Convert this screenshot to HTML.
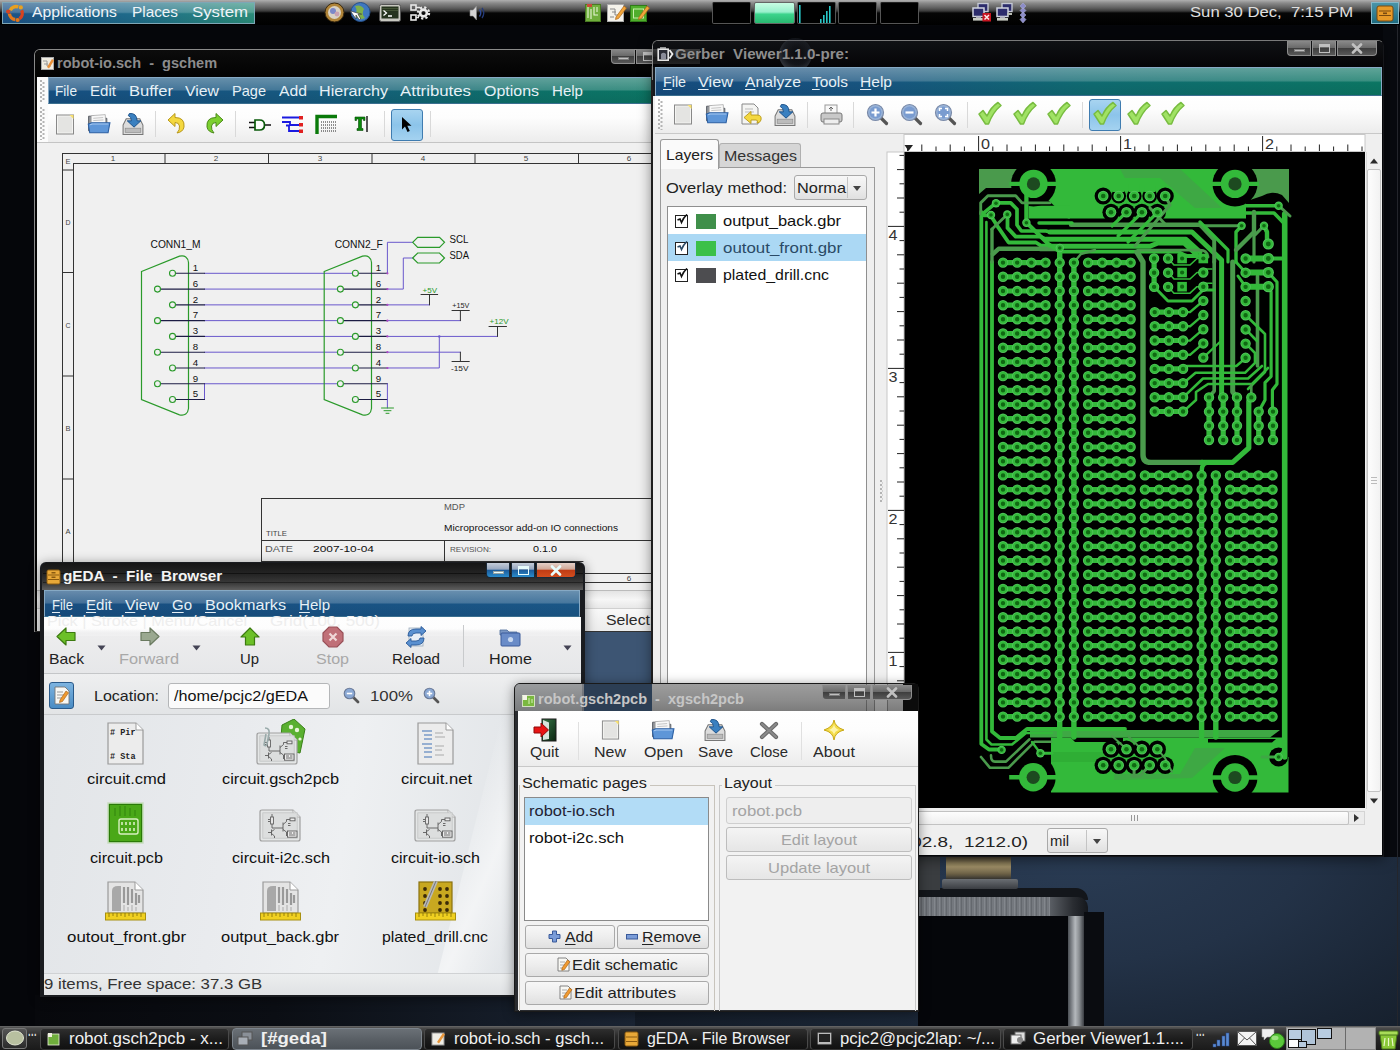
<!DOCTYPE html>
<html><head><meta charset="utf-8"><title>desktop</title><style>
html,body{margin:0;padding:0;}
body{width:1400px;height:1050px;position:relative;overflow:hidden;background:#05060a;font-family:"Liberation Sans",sans-serif;font-size:15px;color:#1a1a1a;}
.a{position:absolute;box-sizing:border-box;}
.t{position:absolute;white-space:pre;line-height:1;transform-origin:0 0;display:block;}
u{text-decoration:underline;text-underline-offset:2px;}
.mb{position:absolute;box-sizing:border-box;border:1px solid #86a9c4;border-bottom-color:#3b6f8f;}
.gloss{position:absolute;left:0;top:0;right:0;bottom:0;background:linear-gradient(to bottom,rgba(255,255,255,.34) 0,rgba(255,255,255,.2) 46%,rgba(255,255,255,0) 54%,rgba(0,0,0,.06) 100%);}
.tb{position:absolute;box-sizing:border-box;background:linear-gradient(to bottom,#ffffff 0,#fdfdfd 35%,#ececec 100%);}
.hd{position:absolute;width:5px;background:radial-gradient(circle at 1px 1px,#b4b4b4 0,#b4b4b4 .8px,transparent 1px) 0 0/5px 4px,radial-gradient(circle at 1px 1px,#b4b4b4 0,#b4b4b4 .8px,transparent 1px) 2.5px 2px/5px 4px;}
.btn{position:absolute;box-sizing:border-box;border:1px solid #a9a9a9;border-radius:3px;background:linear-gradient(to bottom,#f7f7f7 0,#ededed 50%,#e0e0e0 100%);}
.sep{position:absolute;width:1px;background:#d9d9d9;}
</style></head><body><div class="a " style="left:0px;top:0px;width:1400px;height:1050px;background:#05060a;"></div><div class="a " style="left:560px;top:600px;width:840px;height:450px;background:radial-gradient(ellipse 640px 320px at 520px 250px,#2a3c54 0,#233247 35%,#192433 65%,#10161f 100%);"></div><div class="a " style="left:1383px;top:25px;width:17px;height:832px;background:#080a0f;"></div><div class="a " style="left:1397px;top:25px;width:1px;height:1001px;background:#24262c;"></div><div class="a " style="left:584px;top:630px;width:70px;height:60px;background:#3d5573;"></div><div class="a " style="left:35px;top:995px;width:600px;height:35px;background:linear-gradient(to right,#07080c 0,#0b0e14 40%,#1a2433 100%);"></div><div class="a " style="left:918px;top:914px;width:152px;height:116px;background:#05060a;"></div><div class="a " style="left:918px;top:888px;width:170px;height:12px;background:#13161b;border-radius:0 12px 0 0;"></div><div class="a " style="left:918px;top:897px;width:134px;height:19px;background:repeating-linear-gradient(90deg,#6c7076 0,#8a8e94 2px,#5c6066 3px,#7c8086 5px);"></div><div class="a " style="left:1050px;top:897px;width:38px;height:19px;background:linear-gradient(to right,#5a5e64,#2a2d32 60%,#14171c);border-radius:0 10px 0 0;"></div><div class="a " style="left:1068px;top:916px;width:16px;height:114px;background:linear-gradient(to right,#4a4e54,#b4b8bc 45%,#8a8e92 70%,#3a3d42);"></div><div class="a " style="left:1084px;top:912px;width:20px;height:118px;background:#0a0c10;"></div><div class="a " style="left:946px;top:856px;width:65px;height:24px;background:linear-gradient(to bottom,#3a3428,#8a7c58 30%,#a09068 45%,#6b6046 75%,#2a2a2a);"></div><div class="a " style="left:942px;top:879px;width:76px;height:10px;background:linear-gradient(to bottom,#6a6e73,#3a3d42);border-radius:2px;"></div><div class="a " style="left:918px;top:856px;width:22px;height:34px;background:#3a3d40;"></div><div class="a " style="left:0px;top:0px;width:1400px;height:25px;background:linear-gradient(to bottom,#b0b0b0 0,#8a8a8a 3px,#5e5e5e 8px,#3c3c3c 11px,#060606 13px,#000 25px);"></div><div class="a " style="left:2px;top:2px;width:253px;height:22px;background:linear-gradient(to right,#1c5286 0,#1f6a8a 50%,#2a8c7a 100%);border:1px solid #7ea6b6;"><div class="gloss"></div></div><svg class="a" style="left:5px;top:2px;" width="22" height="22" viewBox="0 0 22 22"><g fill="none" stroke-width="3.4"><path d="M5.2 8.2 A6.6 6.6 0 0 1 13.2 4.9" stroke="#e8a020"/><path d="M16.6 8.2 A6.6 6.6 0 0 1 14.5 16.6" stroke="#d8431f"/><path d="M10.2 17.5 A6.6 6.6 0 0 1 4.4 11.6" stroke="#e2761a"/></g><circle cx="3.2" cy="9.6" r="2.1" fill="#d8431f"/><circle cx="15.8" cy="5.4" r="2.1" fill="#e8a020"/><circle cx="12.6" cy="18" r="2.1" fill="#e2761a"/></svg><span class="t" style="left:32.0px;top:4.3px;font-size:15px;color:#eef4f8;transform:scaleX(1.051);">Applications</span><span class="t" style="left:132.0px;top:4.3px;font-size:15px;color:#eef4f8;transform:scaleX(1.022);">Places</span><span class="t" style="left:192.0px;top:4.3px;font-size:15px;color:#eef4f8;transform:scaleX(1.120);">System</span><svg class="a" style="left:324px;top:2px;" width="21" height="21" viewBox="0 0 21 21"><circle cx="10.5" cy="10.5" r="9.5" fill="#b08438" stroke="#3a2a10"/><circle cx="10.5" cy="10.5" r="6.5" fill="#d9d2c4"/><circle cx="9" cy="9" r="3" fill="#7b88c8"/><circle cx="13" cy="12" r="2.4" fill="#c9a0b0"/></svg><svg class="a" style="left:349px;top:2px;" width="22" height="22" viewBox="0 0 22 22"><circle cx="11.5" cy="10" r="9.5" fill="#3f78c0" stroke="#26508a"/><path d="M6 4 Q12 2 15 7 Q12 12 16 16 Q10 19 6 14 Q9 9 6 4Z" fill="#7fb04a"/><path d="M3 10 L10 20 L10 15 L14 21 L16 20 L12.5 14 L17 14Z" fill="#fff" stroke="#333" stroke-width=".8" transform="translate(-1,1) scale(.8)"/></svg><svg class="a" style="left:379px;top:4px;" width="22" height="18" viewBox="0 0 22 18"><rect x=".5" y=".5" width="21" height="17" rx="2" fill="#c8c8c0" stroke="#555"/><rect x="2.5" y="2.5" width="17" height="12" fill="#26341e"/><path d="M3 4.5 H19 M3 6.5 H19" stroke="#4a5a3a" stroke-width=".8"/><path d="M4.5 6.5 L7.5 9 L4.5 11.5 M9 12 H13" stroke="#fff" stroke-width="1.3" fill="none"/></svg><svg class="a" style="left:408px;top:2px;" width="23" height="22" viewBox="0 0 23 22"><g fill="none" stroke="#e8e8e8" stroke-width="1.6"><rect x="3" y="3" width="5" height="5"/><rect x="3" y="13" width="5" height="5"/><circle cx="15.5" cy="11" r="3.4" stroke-width="2.6"/><circle cx="15.5" cy="11" r="5.6" stroke-width="2.2" stroke-dasharray="2.2 2.2"/><path d="M8 5.5 H12 M8 15.5 H11"/></g></svg><svg class="a" style="left:467px;top:3px;" width="24" height="20" viewBox="0 0 24 20"><path d="M3 7 H6 L9.5 3 V17 L6 13 H3Z" fill="#d4d4d4" stroke="#888" stroke-width=".6"/><path d="M12.5 6.5 Q15 10 12.5 13.5" stroke="#2f4a98" stroke-width="1.4" fill="none"/><path d="M15 5 Q18.6 10 15 15" stroke="#243a78" stroke-width="1.3" fill="none"/></svg><svg class="a" style="left:585px;top:3px;" width="17" height="19" viewBox="0 0 17 19"><rect x=".5" y="1.5" width="15" height="17" fill="#6fae3c" stroke="#4a7a24"/><path d="M3 4 V15 M6 6 V16 M9 4 V12 H13 M12 4 V9" stroke="#e8f5d8" stroke-width="1.1" fill="none"/><rect x="2" y="1" width="5" height="3" fill="#c94a3a"/></svg><svg class="a" style="left:607px;top:3px;" width="20" height="19" viewBox="0 0 20 19"><rect x=".5" y="1.5" width="16" height="17" fill="#f4f2ea" stroke="#aaa"/><path d="M3 6 H8 V12 H13 M5 9 H9 M3 14 H7" stroke="#888" stroke-width="1" fill="none"/><path d="M9 14 L17 3 L19.5 5 L11.5 15.5 L8.5 16.5Z" fill="#f2a53a" stroke="#a86418" stroke-width=".7"/></svg><svg class="a" style="left:630px;top:3px;" width="20" height="19" viewBox="0 0 20 19"><rect x=".5" y="2.5" width="16" height="16" fill="#4fae2c" stroke="#2f7a18"/><rect x="3.5" y="6" width="10" height="9" fill="none" stroke="#c8f0a8" stroke-width="1"/><path d="M9 14 L17 3 L19.5 5 L11.5 15.5 L8.5 16.5Z" fill="#f2a53a" stroke="#a86418" stroke-width=".7"/></svg><div class="a " style="left:712px;top:2px;width:39px;height:22px;background:#000;border:1px solid #555;border-top-color:#222;border-radius:2px;"></div><div class="a " style="left:838px;top:2px;width:39px;height:22px;background:#000;border:1px solid #555;border-top-color:#222;border-radius:2px;"></div><div class="a " style="left:880px;top:2px;width:39px;height:22px;background:#000;border:1px solid #555;border-top-color:#222;border-radius:2px;"></div><div class="a " style="left:754px;top:2px;width:41px;height:22px;background:linear-gradient(to bottom,#c8fce4 0,#98f0cc 45%,#3cd48c 56%,#28b870 100%);border:1px solid #666;border-radius:2px;"></div><div class="a " style="left:797px;top:2px;width:39px;height:22px;background:#000;border:1px solid #555;border-top-color:#222;border-radius:2px;"></div><svg class="a" style="left:797px;top:2px;" width="39" height="22" viewBox="0 0 39 22"><rect x="2" y="3" width="1.6" height="18" fill="#28c8c8"/><rect x="23" y="17" width="1.6" height="4" fill="#28c8c8"/><rect x="26" y="13" width="1.6" height="8" fill="#28c8c8"/><rect x="29" y="9" width="1.6" height="12" fill="#28c8c8"/><rect x="32" y="4" width="1.6" height="17" fill="#28c8c8"/></svg><svg class="a" style="left:971px;top:2px;" width="21" height="21" viewBox="0 0 21 21"><rect x="7" y="1.5" width="10" height="8" fill="#2c2c6c" stroke="#c4c8d4" stroke-width="1.4"/><rect x="2" y="6" width="11" height="8.5" fill="#2c2c6c" stroke="#d0d4e0" stroke-width="1.5"/><rect x="2" y="16" width="11" height="2.6" fill="#c8ccc4"/><path d="M5 14.5 H10 V16 H5Z" fill="#aab"/><rect x="12" y="11" width="5" height="2" fill="#b8bcb4"/><rect x="11.5" y="11" width="8.5" height="8.5" fill="#c81420"/><path d="M13.5 13 L18 17.5 M18 13 L13.5 17.5" stroke="#fce8e8" stroke-width="1.5"/></svg><svg class="a" style="left:995px;top:2px;" width="21" height="21" viewBox="0 0 21 21"><rect x="7" y="1.5" width="10" height="8" fill="#2c2c6c" stroke="#c4c8d4" stroke-width="1.4"/><rect x="2" y="6" width="11" height="8.5" fill="#2c2c6c" stroke="#d0d4e0" stroke-width="1.5"/><rect x="2" y="16" width="11" height="2.6" fill="#c8ccc4"/><path d="M5 14.5 H10 V16 H5Z" fill="#aab"/><rect x="12" y="11" width="5" height="2" fill="#b8bcb4"/></svg><svg class="a" style="left:1018px;top:1px;" width="10" height="23" viewBox="0 0 10 23"><path d="M5 2 L8 5 L5 8 L2 5Z M5 6.5 L8 9.5 L5 12.5 L2 9.5Z M5 11 L8 14 L5 17 L2 14Z M5 15.5 L8 18.5 L5 22 L2 18.5Z" fill="#8c8cc8" stroke="#aeb0dc" stroke-width=".5"/></svg><span class="t" style="left:1190.0px;top:4.3px;font-size:15px;color:#e0e0e0;transform:scaleX(1.111);">Sun 30 Dec, &nbsp;7:15 PM</span><div class="a " style="left:1371px;top:2px;width:28px;height:22px;background:linear-gradient(to bottom,#4a94a8,#1e6c80);border:1px solid #86b8c8;"></div><svg class="a" style="left:1376px;top:5px;" width="18" height="17" viewBox="0 0 18 17"><rect x="1" y="1" width="16" height="15" rx="2" fill="#e89a28" stroke="#7a4a10"/><path d="M3 6 H15 M3 10.5 H15" stroke="#7a4a10" stroke-width="1.2"/><rect x="7" y="7.5" width="4" height="1.6" fill="#7a4a10"/></svg><div class="a " style="left:34px;top:49px;width:640px;height:583px;background:#050505;border:1px solid #8a8a8a;border-radius:6px 0 0 0;border-bottom:none;"></div><div class="a " style="left:35px;top:50px;width:640px;height:27px;background:linear-gradient(to bottom,#0c0c0c,#020202);border-radius:5px 0 0 0;"></div><svg class="a" style="left:41px;top:57px;" width="14" height="13" viewBox="0 0 14 13"><rect x=".5" y=".5" width="12" height="12" fill="#f0ece0" stroke="#aaa"/><path d="M2 4 H6 V9 H10 M3 7 H7" stroke="#999" fill="none"/><path d="M6 10 L11 2 L13 3.5 L8 11.5Z" fill="#e8903a"/></svg><span class="t" style="left:57.0px;top:55.3px;font-size:15px;color:#8c8c8c;transform:scaleX(0.970);font-weight:bold;">robot-io.sch &nbsp;- &nbsp;gschem</span><div class="a " style="left:611px;top:49px;width:24px;height:15px;background:linear-gradient(to bottom,#8a8a8a 0,#6a6a6a 48%,#3e3e3e 52%,#585858 100%);border:1px solid #8e8e8e;border-top:none;border-radius:0 0 0 4px;"></div><div class="a " style="left:618px;top:57px;width:11px;height:3px;background:#c0c0c0;border:1px solid rgba(0,0,0,.35);"></div><div class="a " style="left:636px;top:49px;width:24px;height:15px;background:linear-gradient(to bottom,#8a8a8a 0,#6a6a6a 48%,#3e3e3e 52%,#585858 100%);border:1px solid #8e8e8e;border-top:none;border-radius:0;"></div><div class="a " style="left:643px;top:52px;width:11px;height:9px;border:1.5px solid #c0c0c0;border-top-width:3px;"></div><div class="a " style="left:661px;top:49px;width:40px;height:15px;background:linear-gradient(to bottom,#8a8a8a 0,#6a6a6a 48%,#3e3e3e 52%,#585858 100%);border:1px solid #8e8e8e;border-top:none;border-radius:0 0 4px 0;"></div><svg class="a" style="left:675px;top:51px;" width="12" height="11" viewBox="0 0 12 11"><path d="M2 1.5 L10 9.5 M10 1.5 L2 9.5" stroke="#c0c0c0" stroke-width="2.6" stroke-linecap="round"/></svg><div class="a " style="left:37px;top:77px;width:640px;height:554px;background:#f0f0f0;"></div><div class="a " style="left:37px;top:77px;width:11px;height:66px;background:#fbfbfb;"></div><div class="hd" style="left:40px;top:80px;height:22px"></div><div class="hd" style="left:40px;top:107px;height:33px"></div><div class="mb" style="left:48px;top:77px;width:630px;height:27px;background:linear-gradient(to right,#164f80 0,#16587f 40%,#0d6f68 75%,#0b7562 100%);"><div class="gloss"></div></div><span class="t" style="left:55.0px;top:83.3px;font-size:15px;color:#e6f0f6;transform:scaleX(0.910);">File</span><span class="t" style="left:90.0px;top:83.3px;font-size:15px;color:#e6f0f6;transform:scaleX(1.006);">Edit</span><span class="t" style="left:129.0px;top:83.3px;font-size:15px;color:#e6f0f6;transform:scaleX(1.107);">Buffer</span><span class="t" style="left:185.0px;top:83.3px;font-size:15px;color:#e6f0f6;transform:scaleX(1.055);">View</span><span class="t" style="left:232.0px;top:83.3px;font-size:15px;color:#e6f0f6;transform:scaleX(0.971);">Page</span><span class="t" style="left:279.0px;top:83.3px;font-size:15px;color:#e6f0f6;transform:scaleX(1.049);">Add</span><span class="t" style="left:319.0px;top:83.3px;font-size:15px;color:#e6f0f6;transform:scaleX(1.075);">Hierarchy</span><span class="t" style="left:400.0px;top:83.3px;font-size:15px;color:#e6f0f6;transform:scaleX(1.121);">Attributes</span><span class="t" style="left:484.0px;top:83.3px;font-size:15px;color:#e6f0f6;transform:scaleX(1.064);">Options</span><span class="t" style="left:552.0px;top:83.3px;font-size:15px;color:#e6f0f6;transform:scaleX(1.005);">Help</span><div class="tb" style="left:48px;top:104px;width:630px;height:38px;"></div><div class="a " style="left:37px;top:142px;width:640px;height:1px;background:#c4c4c4;"></div><svg class="a" style="left:55px;top:114px;" width="20" height="21" viewBox="0 0 19 21"><rect x="1" y="1" width="17" height="19" fill="#f4f4f2" stroke="#888" stroke-width="1"/><rect x="2.5" y="2.5" width="14" height="16" fill="#e4e4e2"/><path d="M14 1 L18 1 L18 5Z" fill="#f8e070"/></svg><svg class="a" style="left:87px;top:113px;" width="24" height="21" viewBox="0 0 23 20"><path d="M1.5 3 H7 L9 5 H19 V17 H1.5Z" fill="#90949a" stroke="#5a5e64" stroke-width=".9"/><path d="M4 2.5 L17.5 1.5 L18 11 H4Z" fill="#f8f8f8" stroke="#a4a4a4" stroke-width=".7"/><path d="M6 5 L15.5 4.3 M6 7.2 L15.8 6.6" stroke="#bbb" stroke-width=".8"/><path d="M2.6 18.8 L1.2 10.6 L4.5 9.2 H22 L20.2 18.8Z" fill="#5e96d8" stroke="#2c5fa2" stroke-width="1"/><path d="M3 11.2 L5 10.4 H20.5" stroke="#a6c8f0" stroke-width="1" fill="none"/></svg><svg class="a" style="left:121px;top:112px;" width="24" height="24" viewBox="0 0 23 22"><path d="M2 12 L5 6 H18 L21 12 V21 H2Z" fill="#dcdcdc" stroke="#777" stroke-width="1"/><rect x="4" y="15" width="15" height="4" fill="#bbb" stroke="#888" stroke-width=".6"/><path d="M8 1 Q15 0 15.5 8 H19 L12.5 14 L6 8 H10 Q10 4 7 3Z" fill="#3a80c0" stroke="#1a4f88" stroke-width=".9"/></svg><div class="sep" style="left:155px;top:111px;height:26px"></div><div class="sep" style="left:235px;top:111px;height:26px"></div><div class="sep" style="left:384px;top:111px;height:26px"></div><div class="sep" style="left:430px;top:111px;height:26px"></div><svg class="a" style="left:166px;top:112px;" width="22" height="24" viewBox="0 0 22 24"><path d="M2 8 L9 1.5 V5.5 Q19 5.5 18 15 Q17 20 11 21 Q14 18 13.5 14 Q13 10.5 9 10.5 V14.5Z" fill="#f4d840" stroke="#b8981a" stroke-width="1"/></svg><svg class="a" style="left:203px;top:112px;" width="22" height="24" viewBox="0 0 22 24"><path d="M20 8 L13 1.5 V5.5 Q3 5.5 4 15 Q5 20 11 21 Q8 18 8.5 14 Q9 10.5 13 10.5 V14.5Z" fill="#7cd030" stroke="#4a8a18" stroke-width="1"/></svg><svg class="a" style="left:249px;top:119px;" width="22" height="12" viewBox="0 0 22 12"><path d="M0 3.5 H6 M0 8.5 H6 M15 6 H22" stroke="#111" stroke-width="1.5"/><path d="M6 1 H10.5 Q15.5 1 15.5 6 Q15.5 11 10.5 11 H6Z" fill="#fff" stroke="#0a5a0a" stroke-width="1.7"/></svg><svg class="a" style="left:281px;top:115px;" width="23" height="19" viewBox="0 0 23 19"><path d="M1 2.5 H18 M1 7 H9 V10 H18 M5 10.5 H8 V16 H18" stroke="#1a1ae0" stroke-width="1.8" fill="none"/><rect x="18" y="1" width="4" height="3.5" fill="#e02020"/><rect x="18" y="8" width="4" height="3.5" fill="#e02020"/><rect x="18" y="14.5" width="4" height="3.5" fill="#e02020"/></svg><svg class="a" style="left:315px;top:114px;" width="23" height="21" viewBox="0 0 23 21"><path d="M2 20 V2.5 H22" stroke="#0a7a0a" stroke-width="3.4" fill="none"/><path d="M6 8 H22 M6 11 H22 M6 14 H22 M6 17 H22" stroke="#222" stroke-width="1" stroke-dasharray="1 1"/></svg><svg class="a" style="left:354px;top:115px;" width="15" height="18" viewBox="0 0 15 18"><path d="M1 2 H11 V5.5 H9.5 V4 H7.5 V13.5 H9 V15.5 H3 V13.5 H4.5 V4 H2.5 V5.5 H1Z" fill="#0a8a0a" stroke="#064a06" stroke-width=".6"/><path d="M13 1 V17" stroke="#111" stroke-width="1.4"/></svg><div class="a " style="left:391px;top:109px;width:32px;height:32px;background:linear-gradient(to bottom,#a8d4f0 0,#8cc4ea 50%,#a4d2f0 100%);border:1px solid #3f7cb0;border-radius:3px;"></div><svg class="a" style="left:401px;top:116px;" width="12" height="17" viewBox="0 0 12 17"><path d="M1 1 V13.5 L4 10.5 L6.5 16 L8.8 15 L6.3 9.7 H10.5Z" fill="#000"/></svg><svg class="a" style="left:37px;top:143px;" width="640" height="447" viewBox="37 143 640 447"><g font-family="Liberation Sans, sans-serif" fill="none" stroke-linecap="round"><g stroke="#333" stroke-width="1"><path d="M62.5 153.5 H660 M73.5 163.5 H660 M62.5 153.5 V590 M73.5 163.5 V574 M62.5 573.5 H660 M73.5 573.5 H660 M62.5 582.5 H660"/><path d="M165 153.5 V163.5 M165 573.5 V582.5"/><path d="M268.5 153.5 V163.5 M268.5 573.5 V582.5"/><path d="M372 153.5 V163.5 M372 573.5 V582.5"/><path d="M475 153.5 V163.5 M475 573.5 V582.5"/><path d="M578.5 153.5 V163.5 M578.5 573.5 V582.5"/><path d="M62.5 170 H73.5"/><path d="M62.5 272.5 H73.5"/><path d="M62.5 376 H73.5"/><path d="M62.5 479 H73.5"/><path d="M62.5 582 H73.5"/><path d="M261.5 498.5 H660 M261.5 498.5 V573 M261.5 540.5 H660 M444.5 540.5 V573 M261.5 561.5 H583"/></g><text x="113" y="161" font-size="8" fill="#444" textLength="4.5" lengthAdjust="spacingAndGlyphs" text-anchor="middle">1</text><text x="113" y="581" font-size="8" fill="#444" textLength="4.5" lengthAdjust="spacingAndGlyphs" text-anchor="middle">1</text><text x="216" y="161" font-size="8" fill="#444" textLength="4.5" lengthAdjust="spacingAndGlyphs" text-anchor="middle">2</text><text x="216" y="581" font-size="8" fill="#444" textLength="4.5" lengthAdjust="spacingAndGlyphs" text-anchor="middle">2</text><text x="320" y="161" font-size="8" fill="#444" textLength="4.5" lengthAdjust="spacingAndGlyphs" text-anchor="middle">3</text><text x="320" y="581" font-size="8" fill="#444" textLength="4.5" lengthAdjust="spacingAndGlyphs" text-anchor="middle">3</text><text x="423" y="161" font-size="8" fill="#444" textLength="4.5" lengthAdjust="spacingAndGlyphs" text-anchor="middle">4</text><text x="423" y="581" font-size="8" fill="#444" textLength="4.5" lengthAdjust="spacingAndGlyphs" text-anchor="middle">4</text><text x="526" y="161" font-size="8" fill="#444" textLength="4.5" lengthAdjust="spacingAndGlyphs" text-anchor="middle">5</text><text x="526" y="581" font-size="8" fill="#444" textLength="4.5" lengthAdjust="spacingAndGlyphs" text-anchor="middle">5</text><text x="629" y="161" font-size="8" fill="#444" textLength="4.5" lengthAdjust="spacingAndGlyphs" text-anchor="middle">6</text><text x="629" y="581" font-size="8" fill="#444" textLength="4.5" lengthAdjust="spacingAndGlyphs" text-anchor="middle">6</text><text x="68" y="164" font-size="8" fill="#444" textLength="5" lengthAdjust="spacingAndGlyphs" text-anchor="middle">E</text><text x="68" y="225" font-size="8" fill="#444" textLength="5" lengthAdjust="spacingAndGlyphs" text-anchor="middle">D</text><text x="68" y="328" font-size="8" fill="#444" textLength="5" lengthAdjust="spacingAndGlyphs" text-anchor="middle">C</text><text x="68" y="431" font-size="8" fill="#444" textLength="5" lengthAdjust="spacingAndGlyphs" text-anchor="middle">B</text><text x="68" y="534" font-size="8" fill="#444" textLength="5" lengthAdjust="spacingAndGlyphs" text-anchor="middle">A</text><text x="444" y="510" font-size="9.5" fill="#555" textLength="21" lengthAdjust="spacingAndGlyphs" text-anchor="start">MDP</text><text x="444" y="530.5" font-size="9.5" fill="#111" textLength="174" lengthAdjust="spacingAndGlyphs" text-anchor="start">Microprocessor add-on IO connections</text><text x="266" y="536" font-size="7" fill="#444" textLength="21" lengthAdjust="spacingAndGlyphs" text-anchor="start">TITLE</text><text x="265" y="552" font-size="9.5" fill="#555" textLength="28" lengthAdjust="spacingAndGlyphs" text-anchor="start">DATE</text><text x="313" y="552" font-size="9.5" fill="#111" textLength="61" lengthAdjust="spacingAndGlyphs" text-anchor="start">2007-10-04</text><text x="450" y="551.5" font-size="7.5" fill="#555" textLength="41" lengthAdjust="spacingAndGlyphs" text-anchor="start">REVISION:</text><text x="533" y="552" font-size="9.5" fill="#111" textLength="24" lengthAdjust="spacingAndGlyphs" text-anchor="start">0.1.0</text><text x="265" y="569" font-size="9.5" fill="#777" textLength="22" lengthAdjust="spacingAndGlyphs" text-anchor="start">FILE</text><text x="450" y="569" font-size="7.5" fill="#777" textLength="44" lengthAdjust="spacingAndGlyphs" text-anchor="start">DRAWN BY:</text><text x="533" y="569" font-size="9.5" fill="#555" textLength="25" lengthAdjust="spacingAndGlyphs" text-anchor="start">CJEP</text><path d="M204.5 273.3 H352.4" stroke="#6a58cc" stroke-width="1"/><path d="M204.5 289.08 H337.4" stroke="#6a58cc" stroke-width="1"/><path d="M204.5 304.86 H352.4" stroke="#6a58cc" stroke-width="1"/><path d="M204.5 320.64 H337.4" stroke="#6a58cc" stroke-width="1"/><path d="M204.5 336.42 H352.4" stroke="#6a58cc" stroke-width="1"/><path d="M204.5 352.2 H337.4" stroke="#6a58cc" stroke-width="1"/><path d="M204.5 367.98 H352.4" stroke="#6a58cc" stroke-width="1"/><path d="M204.5 383.76 H337.4" stroke="#6a58cc" stroke-width="1"/><path d="M204.5 383.76 V399.54" stroke="#6a58cc" stroke-width="1"/><path d="M141.5 271.5 L179.5 256.2 Q187.5 254.5 188.5 262.5 V408.5 Q187.5 416.5 179.5 414.8 L141.5 399.5 Z" stroke="#2a9a2a" stroke-width="1.2"/><path d="M175.5 273.3 H204.5" stroke="#1c1c44" stroke-width="1.1"/><circle cx="172.5" cy="273.3" r="3" stroke="#2a9a2a" stroke-width="1.1" fill="#f0f0f0"/><text x="192.7" y="271.1" font-size="9.5" fill="#111" textLength="5.4" lengthAdjust="spacingAndGlyphs" text-anchor="start">1</text><path d="M160.5 289.08 H204.5" stroke="#1c1c44" stroke-width="1.1"/><circle cx="157.5" cy="289.08" r="3" stroke="#2a9a2a" stroke-width="1.1" fill="#f0f0f0"/><text x="192.7" y="286.88" font-size="9.5" fill="#111" textLength="5.4" lengthAdjust="spacingAndGlyphs" text-anchor="start">6</text><path d="M175.5 304.86 H204.5" stroke="#1c1c44" stroke-width="1.1"/><circle cx="172.5" cy="304.86" r="3" stroke="#2a9a2a" stroke-width="1.1" fill="#f0f0f0"/><text x="192.7" y="302.66" font-size="9.5" fill="#111" textLength="5.4" lengthAdjust="spacingAndGlyphs" text-anchor="start">2</text><path d="M160.5 320.64 H204.5" stroke="#1c1c44" stroke-width="1.1"/><circle cx="157.5" cy="320.64" r="3" stroke="#2a9a2a" stroke-width="1.1" fill="#f0f0f0"/><text x="192.7" y="318.44" font-size="9.5" fill="#111" textLength="5.4" lengthAdjust="spacingAndGlyphs" text-anchor="start">7</text><path d="M175.5 336.42 H204.5" stroke="#1c1c44" stroke-width="1.1"/><circle cx="172.5" cy="336.42" r="3" stroke="#2a9a2a" stroke-width="1.1" fill="#f0f0f0"/><text x="192.7" y="334.22" font-size="9.5" fill="#111" textLength="5.4" lengthAdjust="spacingAndGlyphs" text-anchor="start">3</text><path d="M160.5 352.2 H204.5" stroke="#1c1c44" stroke-width="1.1"/><circle cx="157.5" cy="352.2" r="3" stroke="#2a9a2a" stroke-width="1.1" fill="#f0f0f0"/><text x="192.7" y="350" font-size="9.5" fill="#111" textLength="5.4" lengthAdjust="spacingAndGlyphs" text-anchor="start">8</text><path d="M175.5 367.98 H204.5" stroke="#1c1c44" stroke-width="1.1"/><circle cx="172.5" cy="367.98" r="3" stroke="#2a9a2a" stroke-width="1.1" fill="#f0f0f0"/><text x="192.7" y="365.78" font-size="9.5" fill="#111" textLength="5.4" lengthAdjust="spacingAndGlyphs" text-anchor="start">4</text><path d="M160.5 383.76 H204.5" stroke="#1c1c44" stroke-width="1.1"/><circle cx="157.5" cy="383.76" r="3" stroke="#2a9a2a" stroke-width="1.1" fill="#f0f0f0"/><text x="192.7" y="381.56" font-size="9.5" fill="#111" textLength="5.4" lengthAdjust="spacingAndGlyphs" text-anchor="start">9</text><path d="M175.5 399.54 H204.5" stroke="#1c1c44" stroke-width="1.1"/><circle cx="172.5" cy="399.54" r="3" stroke="#2a9a2a" stroke-width="1.1" fill="#f0f0f0"/><text x="192.7" y="397.34" font-size="9.5" fill="#111" textLength="5.4" lengthAdjust="spacingAndGlyphs" text-anchor="start">5</text><text x="150.5" y="247.5" font-size="10.5" fill="#111" textLength="50" lengthAdjust="spacingAndGlyphs" text-anchor="start">CONN1_M</text><path d="M324.2 271.5 L362.5 256.2 Q370.5 254.5 371.5 262.5 V408.5 Q370.5 416.5 362.5 414.8 L324.2 399.5 Z" stroke="#2a9a2a" stroke-width="1.2"/><path d="M358.4 273.3 H387.5" stroke="#1c1c44" stroke-width="1.1"/><circle cx="355.4" cy="273.3" r="3" stroke="#2a9a2a" stroke-width="1.1" fill="#f0f0f0"/><text x="375.7" y="271.1" font-size="9.5" fill="#111" textLength="5.4" lengthAdjust="spacingAndGlyphs" text-anchor="start">1</text><path d="M343.4 289.08 H387.5" stroke="#1c1c44" stroke-width="1.1"/><circle cx="340.4" cy="289.08" r="3" stroke="#2a9a2a" stroke-width="1.1" fill="#f0f0f0"/><text x="375.7" y="286.88" font-size="9.5" fill="#111" textLength="5.4" lengthAdjust="spacingAndGlyphs" text-anchor="start">6</text><path d="M358.4 304.86 H387.5" stroke="#1c1c44" stroke-width="1.1"/><circle cx="355.4" cy="304.86" r="3" stroke="#2a9a2a" stroke-width="1.1" fill="#f0f0f0"/><text x="375.7" y="302.66" font-size="9.5" fill="#111" textLength="5.4" lengthAdjust="spacingAndGlyphs" text-anchor="start">2</text><path d="M343.4 320.64 H387.5" stroke="#1c1c44" stroke-width="1.1"/><circle cx="340.4" cy="320.64" r="3" stroke="#2a9a2a" stroke-width="1.1" fill="#f0f0f0"/><text x="375.7" y="318.44" font-size="9.5" fill="#111" textLength="5.4" lengthAdjust="spacingAndGlyphs" text-anchor="start">7</text><path d="M358.4 336.42 H387.5" stroke="#1c1c44" stroke-width="1.1"/><circle cx="355.4" cy="336.42" r="3" stroke="#2a9a2a" stroke-width="1.1" fill="#f0f0f0"/><text x="375.7" y="334.22" font-size="9.5" fill="#111" textLength="5.4" lengthAdjust="spacingAndGlyphs" text-anchor="start">3</text><path d="M343.4 352.2 H387.5" stroke="#1c1c44" stroke-width="1.1"/><circle cx="340.4" cy="352.2" r="3" stroke="#2a9a2a" stroke-width="1.1" fill="#f0f0f0"/><text x="375.7" y="350" font-size="9.5" fill="#111" textLength="5.4" lengthAdjust="spacingAndGlyphs" text-anchor="start">8</text><path d="M358.4 367.98 H387.5" stroke="#1c1c44" stroke-width="1.1"/><circle cx="355.4" cy="367.98" r="3" stroke="#2a9a2a" stroke-width="1.1" fill="#f0f0f0"/><text x="375.7" y="365.78" font-size="9.5" fill="#111" textLength="5.4" lengthAdjust="spacingAndGlyphs" text-anchor="start">4</text><path d="M343.4 383.76 H387.5" stroke="#1c1c44" stroke-width="1.1"/><circle cx="340.4" cy="383.76" r="3" stroke="#2a9a2a" stroke-width="1.1" fill="#f0f0f0"/><text x="375.7" y="381.56" font-size="9.5" fill="#111" textLength="5.4" lengthAdjust="spacingAndGlyphs" text-anchor="start">9</text><path d="M358.4 399.54 H387.5" stroke="#1c1c44" stroke-width="1.1"/><circle cx="355.4" cy="399.54" r="3" stroke="#2a9a2a" stroke-width="1.1" fill="#f0f0f0"/><text x="375.7" y="397.34" font-size="9.5" fill="#111" textLength="5.4" lengthAdjust="spacingAndGlyphs" text-anchor="start">5</text><text x="334.7" y="247.5" font-size="10.5" fill="#111" textLength="48" lengthAdjust="spacingAndGlyphs" text-anchor="start">CONN2_F</text><g stroke="#6a58cc" stroke-width="1"><path d="M387.4 273.3 V242.3 H412.7"/><path d="M387.4 289.08 H403.3 V258 H412.7"/><path d="M387.4 304.86 H429.5"/><path d="M387.4 320.64 H460.4"/><path d="M387.4 336.42 H497.5"/><path d="M387.4 352.2 H460.4"/><path d="M387.4 367.98 H439.3 V336.42"/><path d="M387.4 383.76 V408"/></g><circle cx="387.4" cy="273.3" r="1.1" fill="#b048c8"/><circle cx="387.4" cy="289.08" r="1.1" fill="#b048c8"/><circle cx="387.4" cy="304.86" r="1.1" fill="#b048c8"/><circle cx="387.4" cy="320.64" r="1.1" fill="#b048c8"/><circle cx="387.4" cy="336.42" r="1.1" fill="#b048c8"/><circle cx="387.4" cy="352.2" r="1.1" fill="#b048c8"/><circle cx="387.4" cy="367.98" r="1.1" fill="#b048c8"/><circle cx="439.3" cy="336.42" r="1.2" fill="#6a58cc"/><path d="M412.7 242.3 L417.7 237.3 H439.5 L444.5 242.3 L439.5 247.3 H417.7 Z" stroke="#2a9a2a" stroke-width="1.2"/><path d="M412.7 258 L417.7 253 H439.5 L444.5 258 L439.5 263 H417.7 Z" stroke="#2a9a2a" stroke-width="1.2"/><text x="449.5" y="243" font-size="10.5" fill="#111" textLength="19" lengthAdjust="spacingAndGlyphs" text-anchor="start">SCL</text><text x="449.5" y="258.8" font-size="10.5" fill="#111" textLength="19.5" lengthAdjust="spacingAndGlyphs" text-anchor="start">SDA</text><path d="M421 294.5 H437.7 M429.5 294.5 V304.86" stroke="#333" stroke-width="1"/><text x="422.5" y="292.5" font-size="8" fill="#2a9a2a" textLength="14.5" lengthAdjust="spacingAndGlyphs" text-anchor="start">+5V</text><path d="M452 310.5 H469.3 M460.4 310.5 V320.64" stroke="#333" stroke-width="1"/><text x="452.2" y="308" font-size="8" fill="#222" textLength="17" lengthAdjust="spacingAndGlyphs" text-anchor="start">+15V</text><path d="M489 326.5 H506.5 M497.5 326.5 V336.42" stroke="#333" stroke-width="1"/><text x="489.5" y="324.3" font-size="8" fill="#2a9a2a" textLength="19" lengthAdjust="spacingAndGlyphs" text-anchor="start">+12V</text><path d="M452 361.5 H469.3 M460.4 361.5 V352.2" stroke="#333" stroke-width="1"/><text x="451" y="371" font-size="8" fill="#222" textLength="17.5" lengthAdjust="spacingAndGlyphs" text-anchor="start">-15V</text><path d="M381.5 408 H393.5 M384 410.7 H391 M386 413.3 H389" stroke="#2a9a2a" stroke-width="1"/></g></svg><div class="a " style="left:37px;top:590px;width:640px;height:18px;background:linear-gradient(to bottom,#e4e4e4,#f6f6f6 50%,#e8e8e8);border-top:1px solid #bbb;"></div><div class="a " style="left:37px;top:608px;width:640px;height:23px;background:linear-gradient(to bottom,#f8f8f8,#ececec);border-top:1px solid #d0d0d0;"></div><span class="t" style="left:47.0px;top:613.3px;font-size:15px;color:#555;transform:scaleX(1.084);">Pick | Stroke | Menu/Cancel</span><span class="t" style="left:270.0px;top:613.3px;font-size:15px;color:#555;transform:scaleX(1.137);">Grid(100, 500)</span><span class="t" style="left:606.0px;top:611.8px;font-size:15px;color:#2a2a2a;transform:scaleX(1.055);">Select</span><div class="a " style="left:35px;top:631px;width:640px;height:1px;background:#333;"></div><div class="a " style="left:652px;top:40px;width:732px;height:817px;background:#06070a;border:1px solid #7a7a7a;border-right-color:#15161a;border-bottom-color:#15161a;border-radius:6px 6px 0 0;box-shadow:0 2px 14px rgba(0,0,0,.5);"></div><div class="a " style="left:653px;top:41px;width:730px;height:27px;background:linear-gradient(to bottom,#101114,#040406);border-radius:5px 5px 0 0;"></div><div class="a " style="left:653px;top:49px;width:47px;height:15px;background:linear-gradient(to bottom,#4a4a4a,#2a2a2a 50%,#1c1c1c 52%,#303030);opacity:.7;"></div><div class="a " style="left:779px;top:38px;width:33px;height:33px;border-radius:50%;background:radial-gradient(circle at 55% 40%,rgba(20,24,30,.0) 0,rgba(60,68,80,.25) 50%,rgba(110,118,130,.5) 82%,rgba(150,155,165,.35) 92%,rgba(0,0,0,0) 100%);"></div><svg class="a" style="left:657px;top:47px;" width="17" height="15" viewBox="0 0 17 15"><rect x="1.2" y="2.2" width="10" height="11" fill="#2a2c34" stroke="#e4e4e4" stroke-width="1.6"/><path d="M3 1 H9" stroke="#ccc" stroke-width="1.4"/><path d="M4 7 Q6.5 4.5 9 7 V12 H4Z" fill="#8a8c98"/><path d="M12.5 3 L15.5 7 L12.5 11.5" stroke="#f0f0f0" stroke-width="1.8" fill="none"/></svg><span class="t" style="left:675.0px;top:46.3px;font-size:15px;color:#8e8e8e;transform:scaleX(1.010);font-weight:bold;">Gerber &nbsp;Viewer1.1.0-pre:</span><div class="a " style="left:1287px;top:41px;width:24px;height:15px;background:linear-gradient(to bottom,#8a8a8a 0,#6a6a6a 48%,#3e3e3e 52%,#585858 100%);border:1px solid #8e8e8e;border-top:none;border-radius:0 0 0 4px;"></div><div class="a " style="left:1294px;top:49px;width:11px;height:3px;background:#c0c0c0;border:1px solid rgba(0,0,0,.35);"></div><div class="a " style="left:1312px;top:41px;width:24px;height:15px;background:linear-gradient(to bottom,#8a8a8a 0,#6a6a6a 48%,#3e3e3e 52%,#585858 100%);border:1px solid #8e8e8e;border-top:none;border-radius:0;"></div><div class="a " style="left:1319px;top:44px;width:11px;height:9px;border:1.5px solid #c0c0c0;border-top-width:3px;"></div><div class="a " style="left:1337px;top:41px;width:40px;height:15px;background:linear-gradient(to bottom,#8a8a8a 0,#6a6a6a 48%,#3e3e3e 52%,#585858 100%);border:1px solid #8e8e8e;border-top:none;border-radius:0 0 4px 0;"></div><svg class="a" style="left:1351px;top:43px;" width="12" height="11" viewBox="0 0 12 11"><path d="M2 1.5 L10 9.5 M10 1.5 L2 9.5" stroke="#c0c0c0" stroke-width="2.6" stroke-linecap="round"/></svg><div class="a " style="left:653px;top:67px;width:729px;height:788px;background:#efefef;"></div><div class="a " style="left:651px;top:66px;width:2px;height:790px;background:#1e1e1e;"></div><div class="a " style="left:653px;top:67px;width:2px;height:29px;background:#16181c;"></div><div class="a " style="left:652px;top:46px;width:1px;height:34px;background:#8c8c8c;"></div><div class="mb" style="left:655px;top:67px;width:727px;height:29px;background:linear-gradient(to right,#164c7e 0,#17547f 30%,#0f6a70 60%,#0b7562 100%);"><div class="gloss"></div></div><span class="t" style="left:663.0px;top:74.3px;font-size:15px;color:#e6f0f6;transform:scaleX(0.952);"><u>F</u>ile</span><span class="t" style="left:698.0px;top:74.3px;font-size:15px;color:#e6f0f6;transform:scaleX(1.086);"><u>V</u>iew</span><span class="t" style="left:745.0px;top:74.3px;font-size:15px;color:#e6f0f6;transform:scaleX(1.049);"><u>A</u>nalyze</span><span class="t" style="left:812.0px;top:74.3px;font-size:15px;color:#e6f0f6;transform:scaleX(1.028);"><u>T</u>ools</span><span class="t" style="left:860.0px;top:74.3px;font-size:15px;color:#e6f0f6;transform:scaleX(1.037);"><u>H</u>elp</span><div class="tb" style="left:655px;top:96px;width:727px;height:37px;"></div><div class="a " style="left:655px;top:133px;width:727px;height:1px;background:#c8c8c8;"></div><div class="hd" style="left:658px;top:99px;height:31px"></div><svg class="a" style="left:673px;top:104px;" width="20" height="21" viewBox="0 0 19 21"><rect x="1" y="1" width="17" height="19" fill="#f4f4f2" stroke="#888" stroke-width="1"/><rect x="2.5" y="2.5" width="14" height="16" fill="#e4e4e2"/><path d="M14 1 L18 1 L18 5Z" fill="#f8e070"/></svg><svg class="a" style="left:705px;top:103px;" width="24" height="21" viewBox="0 0 23 20"><path d="M1.5 3 H7 L9 5 H19 V17 H1.5Z" fill="#90949a" stroke="#5a5e64" stroke-width=".9"/><path d="M4 2.5 L17.5 1.5 L18 11 H4Z" fill="#f8f8f8" stroke="#a4a4a4" stroke-width=".7"/><path d="M6 5 L15.5 4.3 M6 7.2 L15.8 6.6" stroke="#bbb" stroke-width=".8"/><path d="M2.6 18.8 L1.2 10.6 L4.5 9.2 H22 L20.2 18.8Z" fill="#5e96d8" stroke="#2c5fa2" stroke-width="1"/><path d="M3 11.2 L5 10.4 H20.5" stroke="#a6c8f0" stroke-width="1" fill="none"/></svg><svg class="a" style="left:740px;top:103px;" width="24" height="23" viewBox="0 0 24 23"><path d="M2 1 H14 L18 5 V21 H2Z" fill="#f4f4f2" stroke="#888"/><path d="M5 6 H13 M5 9 H14" stroke="#bbb"/><path d="M4 14.5 L11 8.5 V12 H17 Q22 12 21 17 Q20 20 17 20 Q18.5 17 16 17 H11 V20.5Z" fill="#f4d840" stroke="#b8981a" stroke-width=".9"/></svg><svg class="a" style="left:773px;top:103px;" width="24" height="24" viewBox="0 0 23 22"><path d="M2 12 L5 6 H18 L21 12 V21 H2Z" fill="#dcdcdc" stroke="#777" stroke-width="1"/><rect x="4" y="15" width="15" height="4" fill="#bbb" stroke="#888" stroke-width=".6"/><path d="M8 1 Q15 0 15.5 8 H19 L12.5 14 L6 8 H10 Q10 4 7 3Z" fill="#3a80c0" stroke="#1a4f88" stroke-width=".9"/></svg><div class="sep" style="left:807px;top:102px;height:26px"></div><div class="sep" style="left:853px;top:102px;height:26px"></div><div class="sep" style="left:967px;top:102px;height:26px"></div><div class="sep" style="left:1082px;top:102px;height:26px"></div><svg class="a" style="left:820px;top:104px;" width="23" height="22" viewBox="0 0 23 22"><rect x="5" y="1" width="12" height="9" fill="#f8f8f8" stroke="#999"/><path d="M11 3 V7 M9 5 L11 3 L13 5" stroke="#666" fill="none"/><rect x="1" y="9" width="21" height="9" rx="2" fill="#c8c8c8" stroke="#777"/><rect x="4" y="15" width="15" height="5" fill="#eee" stroke="#888"/></svg><svg class="a" style="left:866px;top:103px;" width="23" height="23" viewBox="0 0 23 23"><path d="M14.5 14.5 L20.5 20.5" stroke="#555" stroke-width="3.2" stroke-linecap="round"/><circle cx="9.5" cy="9.5" r="8" fill="#9ab4d8" stroke="#7a8aa8" stroke-width="1.2"/><circle cx="9.5" cy="9.5" r="6" fill="#7a9cd0"/><path d="M5.5 9.5 H13.5 M9.5 5.5 V13.5" stroke="#fff" stroke-width="2.2"/></svg><svg class="a" style="left:900px;top:103px;" width="23" height="23" viewBox="0 0 23 23"><path d="M14.5 14.5 L20.5 20.5" stroke="#555" stroke-width="3.2" stroke-linecap="round"/><circle cx="9.5" cy="9.5" r="8" fill="#9ab4d8" stroke="#7a8aa8" stroke-width="1.2"/><circle cx="9.5" cy="9.5" r="6" fill="#7a9cd0"/><path d="M5.5 9.5 H13.5" stroke="#fff" stroke-width="2.2"/></svg><svg class="a" style="left:934px;top:103px;" width="23" height="23" viewBox="0 0 23 23"><path d="M14.5 14.5 L20.5 20.5" stroke="#555" stroke-width="3.2" stroke-linecap="round"/><circle cx="9.5" cy="9.5" r="8" fill="#9ab4d8" stroke="#7a8aa8" stroke-width="1.2"/><circle cx="9.5" cy="9.5" r="6" fill="#7a9cd0"/><path d="M5.5 8 V5.5 H8 M11 5.5 H13.5 V8 M13.5 11 V13.5 H11 M8 13.5 H5.5 V11" stroke="#fff" stroke-width="1.5" fill="none"/></svg><div class="a " style="left:1089px;top:99px;width:32px;height:32px;background:linear-gradient(to bottom,#a8d4f0 0,#8cc4ea 50%,#a4d2f0 100%);border:1px solid #3f7cb0;border-radius:3px;"></div><svg class="a" style="left:977px;top:101px;" width="26" height="26" viewBox="0 0 26 26"><path d="M2 13 L6 9.5 L10 15 Q14 6 21 1.5 L24 4.5 Q16 11 11.5 23 H8.5Z" fill="#a0e264" stroke="#78bc40" stroke-width="1.5" stroke-linejoin="round"/></svg><svg class="a" style="left:1012px;top:101px;" width="26" height="26" viewBox="0 0 26 26"><path d="M2 13 L6 9.5 L10 15 Q14 6 21 1.5 L24 4.5 Q16 11 11.5 23 H8.5Z" fill="#a0e264" stroke="#78bc40" stroke-width="1.5" stroke-linejoin="round"/></svg><svg class="a" style="left:1046px;top:101px;" width="26" height="26" viewBox="0 0 26 26"><path d="M2 13 L6 9.5 L10 15 Q14 6 21 1.5 L24 4.5 Q16 11 11.5 23 H8.5Z" fill="#a0e264" stroke="#78bc40" stroke-width="1.5" stroke-linejoin="round"/></svg><svg class="a" style="left:1092px;top:101px;" width="26" height="26" viewBox="0 0 26 26"><path d="M2 13 L6 9.5 L10 15 Q14 6 21 1.5 L24 4.5 Q16 11 11.5 23 H8.5Z" fill="#a0e264" stroke="#78bc40" stroke-width="1.5" stroke-linejoin="round"/></svg><svg class="a" style="left:1126px;top:101px;" width="26" height="26" viewBox="0 0 26 26"><path d="M2 13 L6 9.5 L10 15 Q14 6 21 1.5 L24 4.5 Q16 11 11.5 23 H8.5Z" fill="#a0e264" stroke="#78bc40" stroke-width="1.5" stroke-linejoin="round"/></svg><svg class="a" style="left:1160px;top:101px;" width="26" height="26" viewBox="0 0 26 26"><path d="M2 13 L6 9.5 L10 15 Q14 6 21 1.5 L24 4.5 Q16 11 11.5 23 H8.5Z" fill="#a0e264" stroke="#78bc40" stroke-width="1.5" stroke-linejoin="round"/></svg><div class="a " style="left:660px;top:167px;width:215px;height:700px;background:#efefef;border:1px solid #9a9a9a;"></div><div class="a " style="left:660px;top:139px;width:59px;height:30px;background:#fafafa;border:1px solid #9a9a9a;border-bottom:none;border-radius:3px 3px 0 0;"></div><div class="a " style="left:719px;top:143px;width:82px;height:24px;background:#d6d6d6;border:1px solid #b0b0b0;border-bottom:none;border-radius:3px 3px 0 0;"></div><span class="t" style="left:666.0px;top:147.3px;font-size:15px;color:#222;transform:scaleX(1.044);">Layers</span><span class="t" style="left:724.0px;top:148.3px;font-size:15px;color:#333;transform:scaleX(1.068);">Messages</span><span class="t" style="left:666.0px;top:180.3px;font-size:15px;color:#222;transform:scaleX(1.100);">Overlay method:</span><div class="a btn" style="left:794px;top:175px;width:73px;height:25px;"></div><div class="a " style="left:847px;top:177px;width:1px;height:21px;background:#c4c4c4;"></div><span class="t" style="left:797.0px;top:180.3px;font-size:15px;color:#222;transform:scaleX(1.089);">Norma</span><svg class="a" style="left:852px;top:185px;" width="10" height="7" viewBox="0 0 10 7"><path d="M1 1 H9 L5 6Z" fill="#444"/></svg><div class="a " style="left:667px;top:206px;width:200px;height:660px;background:#fff;border:1px solid #8f8f8f;"></div><div class="a " style="left:668px;top:234px;width:198px;height:27px;background:#abd8f4;"></div><div class="a " style="left:675px;top:214.5px;width:13px;height:13px;background:#fff;border:1px solid #222;"></div><svg class="a" style="left:676px;top:214px;" width="12" height="12" viewBox="0 0 12 12"><path d="M1.5 6 L4 5 L5.5 8.5 Q7.5 3.5 11 .5" stroke="#111" stroke-width="1.6" fill="none"/></svg><div class="a " style="left:696px;top:213.5px;width:20px;height:15px;background:#3f8f4a;"></div><span class="t" style="left:723.0px;top:213.3px;font-size:15px;color:#111;transform:scaleX(1.097);">output_back.gbr</span><div class="a " style="left:675px;top:241.5px;width:13px;height:13px;background:#fff;border:1px solid #222;"></div><svg class="a" style="left:676px;top:241px;" width="12" height="12" viewBox="0 0 12 12"><path d="M1.5 6 L4 5 L5.5 8.5 Q7.5 3.5 11 .5" stroke="#2a4a66" stroke-width="1.6" fill="none"/></svg><div class="a " style="left:696px;top:240.5px;width:20px;height:15px;background:#3cc048;"></div><span class="t" style="left:723.0px;top:240.3px;font-size:15px;color:#2a4a66;transform:scaleX(1.124);">outout_front.gbr</span><div class="a " style="left:675px;top:268.5px;width:13px;height:13px;background:#fff;border:1px solid #222;"></div><svg class="a" style="left:676px;top:268px;" width="12" height="12" viewBox="0 0 12 12"><path d="M1.5 6 L4 5 L5.5 8.5 Q7.5 3.5 11 .5" stroke="#111" stroke-width="1.6" fill="none"/></svg><div class="a " style="left:696px;top:267.5px;width:20px;height:15px;background:#4d4d50;"></div><span class="t" style="left:723.0px;top:267.3px;font-size:15px;color:#111;transform:scaleX(1.059);">plated_drill.cnc</span><div class="hd" style="left:880px;top:480px;height:22px;width:3px"></div><div class="a " style="left:904px;top:151px;width:461px;height:657px;background:#000;"></div><svg class="a" style="left:880px;top:130px;" width="500" height="690" viewBox="880 130 500 690"><rect x="904" y="134.5" width="461" height="17" fill="#fff" stroke="#c8c8c8"/><path d="M907.6 146.5V151M921.8 144.5V151M936.0 146.5V151M950.2 144.5V151M964.4 146.5V151M978.6 136V151M992.8 146.5V151M1007.0 144.5V151M1021.2 146.5V151M1035.4 144.5V151M1049.6 146.5V151M1063.8 144.5V151M1078.0 146.5V151M1092.2 144.5V151M1106.4 146.5V151M1120.6 136V151M1134.8 146.5V151M1149.0 144.5V151M1163.2 146.5V151M1177.4 144.5V151M1191.6 146.5V151M1205.8 144.5V151M1220.0 146.5V151M1234.2 144.5V151M1248.4 146.5V151M1262.6 136V151M1276.8 146.5V151M1291.0 144.5V151M1305.2 146.5V151M1319.4 144.5V151M1333.6 146.5V151M1347.8 144.5V151M1362.0 146.5V151" stroke="#222" stroke-width="1"/><text x="981.1" y="148.5" font-size="14" fill="#333" font-family="Liberation Sans, sans-serif" textLength="9" lengthAdjust="spacingAndGlyphs">0</text><text x="1123.1" y="148.5" font-size="14" fill="#333" font-family="Liberation Sans, sans-serif" textLength="9" lengthAdjust="spacingAndGlyphs">1</text><text x="1265.1" y="148.5" font-size="14" fill="#333" font-family="Liberation Sans, sans-serif" textLength="9" lengthAdjust="spacingAndGlyphs">2</text><path d="M904.5 145H913L908.5 151Z" fill="#222"/><rect x="887" y="152" width="17" height="656" fill="#fff" stroke="#c8c8c8"/><path d="M888 794.4H904M899.5 780.2H904M897 766.0H904M899.5 751.8H904M897 737.6H904M899.5 723.4H904M897 709.2H904M899.5 695.0H904M897 680.8H904M899.5 666.6H904M888 652.4H904M899.5 638.2H904M897 624.0H904M899.5 609.8H904M897 595.6H904M899.5 581.4H904M897 567.2H904M899.5 553.0H904M897 538.8H904M899.5 524.6H904M888 510.4H904M899.5 496.2H904M897 482.0H904M899.5 467.8H904M897 453.6H904M899.5 439.4H904M897 425.2H904M899.5 411.0H904M897 396.8H904M899.5 382.6H904M888 368.4H904M899.5 354.2H904M897 340.0H904M899.5 325.8H904M897 311.6H904M899.5 297.4H904M897 283.2H904M899.5 269.0H904M897 254.8H904M899.5 240.6H904M888 226.4H904M899.5 212.2H904M897 198.0H904M899.5 183.8H904M897 169.6H904M899.5 155.4H904" stroke="#222" stroke-width="1"/><text x="888.5" y="665.9" font-size="14" fill="#333" font-family="Liberation Sans, sans-serif" textLength="9" lengthAdjust="spacingAndGlyphs">1</text><text x="888.5" y="523.9" font-size="14" fill="#333" font-family="Liberation Sans, sans-serif" textLength="9" lengthAdjust="spacingAndGlyphs">2</text><text x="888.5" y="381.9" font-size="14" fill="#333" font-family="Liberation Sans, sans-serif" textLength="9" lengthAdjust="spacingAndGlyphs">3</text><text x="888.5" y="239.9" font-size="14" fill="#333" font-family="Liberation Sans, sans-serif" textLength="9" lengthAdjust="spacingAndGlyphs">4</text></svg><svg class="a" style="left:904px;top:151px;" width="461" height="657" viewBox="904 151 461 657"><path d="M979 169H1030V188H986L979 194Z" fill="#4a9a4c"/><path d="M1195 169H1289V203L1282 195Q1272 190 1262 196L1250 200H1238L1210 186Z" fill="#4a9a4c"/><path d="M1048 169H1215L1246 203V218.6H1068L1048 200Z" fill="#33b93a"/><path d="M1120 169H1180L1222 208H1195L1160 178H1125Z" fill="#3ea844"/><path d="M1028.6 205.7H1070V218.6H1028.6Z" fill="#33b93a"/><path d="M1051 737.5H1284V757L1288.5 757V792.5H1051Z" fill="#33b93a"/><path d="M1030 730H1280L1270 737.5H1030Z" fill="#3ea844"/><path d="M1051 752H1105V762H1051Z" fill="#2fae35"/><path d="M1195 748L1225 748L1192 778L1114 780V774H1180Z" fill="#3ea844"/><circle cx="1033.5" cy="183.9" r="22.5" fill="#000"/><circle cx="1235" cy="183.9" r="22.5" fill="#000"/><circle cx="1033.2" cy="777.3" r="22.5" fill="#000"/><circle cx="1235" cy="777.5" r="22.5" fill="#000"/><circle cx="1103.2" cy="196" r="8.6" fill="#000"/><circle cx="1118.7" cy="196" r="7.4" fill="#000"/><circle cx="1134.2" cy="196" r="7.4" fill="#000"/><circle cx="1149.7" cy="196" r="7.4" fill="#000"/><circle cx="1165.2" cy="196" r="8.6" fill="#000"/><circle cx="1111" cy="212.3" r="8.6" fill="#000"/><circle cx="1126.45" cy="212.3" r="8.6" fill="#000"/><circle cx="1141.9" cy="212.3" r="8.6" fill="#000"/><circle cx="1157.35" cy="212.3" r="8.6" fill="#000"/><circle cx="1111" cy="749.2" r="8.6" fill="#000"/><circle cx="1126.45" cy="749.2" r="8.6" fill="#000"/><circle cx="1141.9" cy="749.2" r="8.6" fill="#000"/><circle cx="1157.35" cy="749.2" r="8.6" fill="#000"/><circle cx="1103.2" cy="765.3" r="8.6" fill="#000"/><circle cx="1118.7" cy="765.3" r="8.6" fill="#000"/><circle cx="1134.2" cy="765.3" r="8.6" fill="#000"/><circle cx="1149.7" cy="765.3" r="8.6" fill="#000"/><circle cx="1165.2" cy="765.3" r="8.6" fill="#000"/><circle cx="1278.6" cy="757" r="9.5" fill="#000"/><path d="M1071 738H1123V742H1075Z" fill="#000"/><path d="M1208 739H1276L1272 742.5H1208Z" fill="#000"/><path d="M1071 224.8H1200" stroke="#4a9a4c" stroke-width="4.4" fill="none" stroke-linejoin="round" stroke-linecap="round"/><path d="M1050 232H1192L1221.6 260V394" stroke="#33b93a" stroke-width="5" fill="none" stroke-linejoin="round" stroke-linecap="round"/><path d="M1046 239.3H1186L1200 252" stroke="#33b93a" stroke-width="5" fill="none" stroke-linejoin="round" stroke-linecap="round"/><path d="M1042 246.3H1150L1158 243H1184L1196 254" stroke="#33b93a" stroke-width="5" fill="none" stroke-linejoin="round" stroke-linecap="round"/><path d="M1059.8 251.6H1178L1186 256H1198" stroke="#33b93a" stroke-width="3.8" fill="none" stroke-linejoin="round" stroke-linecap="round"/><path d="M1040 249.5H1058" stroke="#4a9a4c" stroke-width="3.4" fill="none" stroke-linejoin="round" stroke-linecap="round"/><path d="M1200 224.8L1214.2 240V262" stroke="#4a9a4c" stroke-width="4" fill="none" stroke-linejoin="round" stroke-linecap="round"/><path d="M1278.6 205.7H1246" stroke="#33b93a" stroke-width="3.4" fill="none" stroke-linejoin="round" stroke-linecap="round"/><path d="M1246 213H1274L1284.7 224" stroke="#33b93a" stroke-width="3.6" fill="none" stroke-linejoin="round" stroke-linecap="round"/><path d="M1150 208L1165 224" stroke="#4a9a4c" stroke-width="3" fill="none" stroke-linejoin="round" stroke-linecap="round"/><path d="M1126.3 212.3L1112 226" stroke="#33b93a" stroke-width="3.2" fill="none" stroke-linejoin="round" stroke-linecap="round"/><path d="M1142.1 212.3L1118 236" stroke="#33b93a" stroke-width="3.2" fill="none" stroke-linejoin="round" stroke-linecap="round"/><path d="M1157.4 212.3L1128 242" stroke="#33b93a" stroke-width="3.2" fill="none" stroke-linejoin="round" stroke-linecap="round"/><path d="M1165.2 196L1170 205L1135 246" stroke="#4a9a4c" stroke-width="3.2" fill="none" stroke-linejoin="round" stroke-linecap="round"/><path d="M1118.5 192V186" stroke="#33b93a" stroke-width="11" fill="none" stroke-linejoin="round" stroke-linecap="butt"/><path d="M1134.3 192V184" stroke="#33b93a" stroke-width="11" fill="none" stroke-linejoin="round" stroke-linecap="butt"/><path d="M1149.6 192V186" stroke="#33b93a" stroke-width="11" fill="none" stroke-linejoin="round" stroke-linecap="butt"/><path d="M1026.4 184V222.5" stroke="#33b93a" stroke-width="4.3" fill="none" stroke-linejoin="round" stroke-linecap="round"/><path d="M981.3 212V744L989 749.5H1001" stroke="#33b93a" stroke-width="3.8" fill="none" stroke-linejoin="round" stroke-linecap="round"/><path d="M986.4 222V739.5L991.5 744.5H1012L1026 733H1052" stroke="#33b93a" stroke-width="2.6" fill="none" stroke-linejoin="round" stroke-linecap="round"/><path d="M992 262V731.5L1000 738H1016L1027 729H1125" stroke="#33b93a" stroke-width="3.8" fill="none" stroke-linejoin="round" stroke-linecap="round"/><path d="M992 229.3V262" stroke="#4a9a4c" stroke-width="3.4" fill="none" stroke-linejoin="round" stroke-linecap="round"/><path d="M980.7 214V202.9L987.9 195.7H1015.7L1022 202.9H1050" stroke="#4a9a4c" stroke-width="2.9" fill="none" stroke-linejoin="round" stroke-linecap="round"/><path d="M982.9 213.6L996 202.9H1010.7L1017 209.3V225L1021.4 231H1046L1050 232" stroke="#33b93a" stroke-width="3.7" fill="none" stroke-linejoin="round" stroke-linecap="round"/><path d="M984.3 215.4H990.7L998.6 227.9L1008.6 242.5H1036L1042 246.3" stroke="#33b93a" stroke-width="3.8" fill="none" stroke-linejoin="round" stroke-linecap="round"/><path d="M1007.5 214.3V227.9L1015.7 236.6H1040L1046 239.3" stroke="#33b93a" stroke-width="3.8" fill="none" stroke-linejoin="round" stroke-linecap="round"/><path d="M1007.5 214.3L991.8 229.3" stroke="#4a9a4c" stroke-width="2.8" fill="none" stroke-linejoin="round" stroke-linecap="round"/><path d="M1026.4 222.5L1048.6 244.3L1059.8 251.6" stroke="#33b93a" stroke-width="4" fill="none" stroke-linejoin="round" stroke-linecap="round"/><path d="M992.9 254L998.6 248.8H1046.4" stroke="#4a9a4c" stroke-width="4.4" fill="none" stroke-linejoin="round" stroke-linecap="round"/><path d="M1039 223H1072" stroke="#33b93a" stroke-width="3.4" fill="none" stroke-linejoin="round" stroke-linecap="round"/><path d="M1232.7 262V392L1237 397.4" stroke="#4a9a4c" stroke-width="5" fill="none" stroke-linejoin="round" stroke-linecap="round"/><path d="M1214.2 262V391L1209 397.4" stroke="#4a9a4c" stroke-width="3.6" fill="none" stroke-linejoin="round" stroke-linecap="round"/><path d="M1221.6 394L1223.2 397.4" stroke="#33b93a" stroke-width="4" fill="none" stroke-linejoin="round" stroke-linecap="round"/><path d="M1257.5 276V366" stroke="#4a9a4c" stroke-width="3.6" fill="none" stroke-linejoin="round" stroke-linecap="round"/><path d="M1284.7 214V757" stroke="#33b93a" stroke-width="5.6" fill="none" stroke-linejoin="round" stroke-linecap="round"/><path d="M1278.6 205.7L1290 216" stroke="#4a9a4c" stroke-width="3" fill="none" stroke-linejoin="round" stroke-linecap="round"/><path d="M1241.6 225.7L1236 232V262" stroke="#33b93a" stroke-width="3.4" fill="none" stroke-linejoin="round" stroke-linecap="round"/><path d="M1241.6 225.7H1200" stroke="#4a9a4c" stroke-width="3" fill="none" stroke-linejoin="round" stroke-linecap="round"/><path d="M1264 225.7L1267 232V244" stroke="#33b93a" stroke-width="4.4" fill="none" stroke-linejoin="round" stroke-linecap="round"/><path d="M1264 225.7L1254 236V262" stroke="#4a9a4c" stroke-width="3.2" fill="none" stroke-linejoin="round" stroke-linecap="round"/><path d="M1254 212V232L1236 250" stroke="#4a9a4c" stroke-width="4.4" fill="none" stroke-linejoin="round" stroke-linecap="round"/><path d="M1200 222L1228 250V262" stroke="#33b93a" stroke-width="3.2" fill="none" stroke-linejoin="round" stroke-linecap="round"/><path d="M1245.5 258.5 H1268.3" stroke="#33b93a" stroke-width="6" fill="none" stroke-linejoin="round" stroke-linecap="round"/><path d="M1245.5 272.5 H1268.3" stroke="#33b93a" stroke-width="6" fill="none" stroke-linejoin="round" stroke-linecap="round"/><path d="M1245.5 286.7 H1268.3" stroke="#33b93a" stroke-width="6" fill="none" stroke-linejoin="round" stroke-linecap="round"/><path d="M1268.3 258.5H1284" stroke="#33b93a" stroke-width="4" fill="none" stroke-linejoin="round" stroke-linecap="round"/><path d="M1268.3 286.7L1271.1 292V376.5L1265 382.7V400L1258.7 411.6" stroke="#33b93a" stroke-width="3.2" fill="none" stroke-linejoin="round" stroke-linecap="round"/><path d="M1268.3 272.5L1277 282V384L1272.4 390V405L1273 411.6" stroke="#33b93a" stroke-width="3.2" fill="none" stroke-linejoin="round" stroke-linecap="round"/><path d="M1236 262L1245.5 272.5" stroke="#33b93a" stroke-width="3" fill="none" stroke-linejoin="round" stroke-linecap="round"/><path d="M1238 276L1245.5 286.7" stroke="#33b93a" stroke-width="3" fill="none" stroke-linejoin="round" stroke-linecap="round"/><path d="M1245.7 315.2L1265 334V372L1255 382L1248 389" stroke="#33b93a" stroke-width="2.6" fill="none" stroke-linejoin="round" stroke-linecap="round"/><path d="M1245.7 329.4L1257 341" stroke="#33b93a" stroke-width="2.6" fill="none" stroke-linejoin="round" stroke-linecap="round"/><path d="M1245.7 343.7L1255 353V362.9L1245 372.8H1195.6L1183.2 383.3" stroke="#33b93a" stroke-width="2.6" fill="none" stroke-linejoin="round" stroke-linecap="round"/><path d="M1245.7 357.9L1236.4 366H1183.2" stroke="#33b93a" stroke-width="2.6" fill="none" stroke-linejoin="round" stroke-linecap="round"/><path d="M1183.2 397.4L1203 378.5H1248L1262 366" stroke="#33b93a" stroke-width="2.6" fill="none" stroke-linejoin="round" stroke-linecap="round"/><path d="M1183.2 411.6L1196 400V392L1208 384H1252L1268 368" stroke="#33b93a" stroke-width="2.6" fill="none" stroke-linejoin="round" stroke-linecap="round"/><path d="M1251.3 397.4V385" stroke="#4a9a4c" stroke-width="2.6" fill="none" stroke-linejoin="round" stroke-linecap="round"/><path d="M1203 357.9L1222 340" stroke="#33b93a" stroke-width="2.2" fill="none" stroke-linejoin="round" stroke-linecap="round"/><path d="M1168.1 258.5 L1174 265 H1190L1197 258.5 H1203.3" stroke="#33b93a" stroke-width="1.6" fill="none" stroke-linejoin="round" stroke-linecap="round"/><path d="M1168.1 272.5 L1174 279 H1190L1197 272.5 H1203.3" stroke="#33b93a" stroke-width="1.6" fill="none" stroke-linejoin="round" stroke-linecap="round"/><path d="M1203.3 269 H1212" stroke="#33b93a" stroke-width="1.4" fill="none" stroke-linejoin="round" stroke-linecap="round"/><path d="M1168.1 286.7 L1174 293.2 H1190L1197 286.7 H1203.3" stroke="#33b93a" stroke-width="1.6" fill="none" stroke-linejoin="round" stroke-linecap="round"/><path d="M1203.3 283.2 H1212" stroke="#33b93a" stroke-width="1.4" fill="none" stroke-linejoin="round" stroke-linecap="round"/><path d="M1154.1 286.7L1168 301H1192L1203 290H1214" stroke="#33b93a" stroke-width="3" fill="none" stroke-linejoin="round" stroke-linecap="round"/><path d="M1183.2 312.1 H1190L1203 301" stroke="#33b93a" stroke-width="2.4" fill="none" stroke-linejoin="round" stroke-linecap="round"/><path d="M1183.2 326.3 H1190L1203 315.2" stroke="#33b93a" stroke-width="2.4" fill="none" stroke-linejoin="round" stroke-linecap="round"/><path d="M1183.2 340.6 H1190L1203 329.4" stroke="#33b93a" stroke-width="2.4" fill="none" stroke-linejoin="round" stroke-linecap="round"/><path d="M1183.2 354.8 H1190L1203 343.7" stroke="#33b93a" stroke-width="2.4" fill="none" stroke-linejoin="round" stroke-linecap="round"/><path d="M1154.7 312.1 H1183.2" stroke="#33b93a" stroke-width="5.2" fill="none" stroke-linejoin="round" stroke-linecap="round"/><path d="M1154.7 326.3 H1183.2" stroke="#33b93a" stroke-width="5.2" fill="none" stroke-linejoin="round" stroke-linecap="round"/><path d="M1154.7 340.5 H1183.2" stroke="#33b93a" stroke-width="5.2" fill="none" stroke-linejoin="round" stroke-linecap="round"/><path d="M1154.7 354.7 H1183.2" stroke="#33b93a" stroke-width="5.2" fill="none" stroke-linejoin="round" stroke-linecap="round"/><path d="M1154.7 368.9 H1183.2" stroke="#33b93a" stroke-width="5.2" fill="none" stroke-linejoin="round" stroke-linecap="round"/><path d="M1154.7 383.1 H1183.2" stroke="#33b93a" stroke-width="5.2" fill="none" stroke-linejoin="round" stroke-linecap="round"/><path d="M1154.7 397.3 H1183.2" stroke="#33b93a" stroke-width="5.2" fill="none" stroke-linejoin="round" stroke-linecap="round"/><path d="M1154.7 411.5 H1183.2" stroke="#33b93a" stroke-width="5.2" fill="none" stroke-linejoin="round" stroke-linecap="round"/><path d="M1154.1 258.5V286.7" stroke="#33b93a" stroke-width="5.2" fill="none" stroke-linejoin="round" stroke-linecap="round"/><path d="M1209 397.4V440.1" stroke="#33b93a" stroke-width="5.2" fill="none" stroke-linejoin="round" stroke-linecap="round"/><path d="M1223.2 397.4V440.1" stroke="#33b93a" stroke-width="5.2" fill="none" stroke-linejoin="round" stroke-linecap="round"/><path d="M1237 397.4V440.1" stroke="#33b93a" stroke-width="5.2" fill="none" stroke-linejoin="round" stroke-linecap="round"/><path d="M1258.7 411.6V440.1" stroke="#33b93a" stroke-width="5.2" fill="none" stroke-linejoin="round" stroke-linecap="round"/><path d="M1273 411.6V440.1" stroke="#33b93a" stroke-width="5.2" fill="none" stroke-linejoin="round" stroke-linecap="round"/><path d="M1137 252L1143 262V455Q1143 462.4 1151 462.4H1202" stroke="#4a9a4c" stroke-width="5.4" fill="none" stroke-linejoin="round" stroke-linecap="round"/><path d="M1202 462.4H1232.7L1248.8 448V401L1251.3 397.4" stroke="#33b93a" stroke-width="5.2" fill="none" stroke-linejoin="round" stroke-linecap="round"/><path d="M1201.8 475V470Q1201.8 462.4 1210 462.4" stroke="#33b93a" stroke-width="4.4" fill="none" stroke-linejoin="round" stroke-linecap="round"/><path d="M1138 250.2H1200Q1207 250.2 1208 257" stroke="#4a9a4c" stroke-width="2.8" fill="none" stroke-linejoin="round" stroke-linecap="round"/><path d="M1003.0 262.6H1045.6" stroke="#33b93a" stroke-width="5.2" fill="none" stroke-linejoin="round" stroke-linecap="round"/><path d="M1088.1 262.6H1130.7" stroke="#33b93a" stroke-width="5.2" fill="none" stroke-linejoin="round" stroke-linecap="round"/><path d="M1003.0 276.8H1045.6" stroke="#33b93a" stroke-width="5.2" fill="none" stroke-linejoin="round" stroke-linecap="round"/><path d="M1088.1 276.8H1130.7" stroke="#33b93a" stroke-width="5.2" fill="none" stroke-linejoin="round" stroke-linecap="round"/><path d="M1003.0 291.0H1045.6" stroke="#33b93a" stroke-width="5.2" fill="none" stroke-linejoin="round" stroke-linecap="round"/><path d="M1088.1 291.0H1130.7" stroke="#33b93a" stroke-width="5.2" fill="none" stroke-linejoin="round" stroke-linecap="round"/><path d="M1003.0 305.2H1045.6" stroke="#33b93a" stroke-width="5.2" fill="none" stroke-linejoin="round" stroke-linecap="round"/><path d="M1088.1 305.2H1130.7" stroke="#33b93a" stroke-width="5.2" fill="none" stroke-linejoin="round" stroke-linecap="round"/><path d="M1003.0 319.3H1045.6" stroke="#33b93a" stroke-width="5.2" fill="none" stroke-linejoin="round" stroke-linecap="round"/><path d="M1088.1 319.3H1130.7" stroke="#33b93a" stroke-width="5.2" fill="none" stroke-linejoin="round" stroke-linecap="round"/><path d="M1003.0 333.5H1045.6" stroke="#33b93a" stroke-width="5.2" fill="none" stroke-linejoin="round" stroke-linecap="round"/><path d="M1088.1 333.5H1130.7" stroke="#33b93a" stroke-width="5.2" fill="none" stroke-linejoin="round" stroke-linecap="round"/><path d="M1003.0 347.7H1045.6" stroke="#33b93a" stroke-width="5.2" fill="none" stroke-linejoin="round" stroke-linecap="round"/><path d="M1088.1 347.7H1130.7" stroke="#33b93a" stroke-width="5.2" fill="none" stroke-linejoin="round" stroke-linecap="round"/><path d="M1003.0 361.9H1045.6" stroke="#33b93a" stroke-width="5.2" fill="none" stroke-linejoin="round" stroke-linecap="round"/><path d="M1088.1 361.9H1130.7" stroke="#33b93a" stroke-width="5.2" fill="none" stroke-linejoin="round" stroke-linecap="round"/><path d="M1003.0 376.1H1045.6" stroke="#33b93a" stroke-width="5.2" fill="none" stroke-linejoin="round" stroke-linecap="round"/><path d="M1088.1 376.1H1130.7" stroke="#33b93a" stroke-width="5.2" fill="none" stroke-linejoin="round" stroke-linecap="round"/><path d="M1003.0 390.3H1045.6" stroke="#33b93a" stroke-width="5.2" fill="none" stroke-linejoin="round" stroke-linecap="round"/><path d="M1088.1 390.3H1130.7" stroke="#33b93a" stroke-width="5.2" fill="none" stroke-linejoin="round" stroke-linecap="round"/><path d="M1003.0 404.5H1045.6" stroke="#33b93a" stroke-width="5.2" fill="none" stroke-linejoin="round" stroke-linecap="round"/><path d="M1088.1 404.5H1130.7" stroke="#33b93a" stroke-width="5.2" fill="none" stroke-linejoin="round" stroke-linecap="round"/><path d="M1003.0 418.7H1045.6" stroke="#33b93a" stroke-width="5.2" fill="none" stroke-linejoin="round" stroke-linecap="round"/><path d="M1088.1 418.7H1130.7" stroke="#33b93a" stroke-width="5.2" fill="none" stroke-linejoin="round" stroke-linecap="round"/><path d="M1003.0 432.8H1045.6" stroke="#33b93a" stroke-width="5.2" fill="none" stroke-linejoin="round" stroke-linecap="round"/><path d="M1088.1 432.8H1130.7" stroke="#33b93a" stroke-width="5.2" fill="none" stroke-linejoin="round" stroke-linecap="round"/><path d="M1003.0 447.0H1045.6" stroke="#33b93a" stroke-width="5.2" fill="none" stroke-linejoin="round" stroke-linecap="round"/><path d="M1088.1 447.0H1130.7" stroke="#33b93a" stroke-width="5.2" fill="none" stroke-linejoin="round" stroke-linecap="round"/><path d="M1003.0 461.2H1045.6" stroke="#33b93a" stroke-width="5.2" fill="none" stroke-linejoin="round" stroke-linecap="round"/><path d="M1088.1 461.2H1130.7" stroke="#33b93a" stroke-width="5.2" fill="none" stroke-linejoin="round" stroke-linecap="round"/><path d="M1003.0 475.4H1045.6" stroke="#33b93a" stroke-width="5.2" fill="none" stroke-linejoin="round" stroke-linecap="round"/><path d="M1088.1 475.4H1130.7" stroke="#33b93a" stroke-width="5.2" fill="none" stroke-linejoin="round" stroke-linecap="round"/><path d="M1144.9 475.4H1187.4" stroke="#33b93a" stroke-width="5.2" fill="none" stroke-linejoin="round" stroke-linecap="round"/><path d="M1230.0 475.4H1272.6" stroke="#33b93a" stroke-width="5.2" fill="none" stroke-linejoin="round" stroke-linecap="round"/><path d="M1003.0 489.6H1045.6" stroke="#33b93a" stroke-width="5.2" fill="none" stroke-linejoin="round" stroke-linecap="round"/><path d="M1088.1 489.6H1130.7" stroke="#33b93a" stroke-width="5.2" fill="none" stroke-linejoin="round" stroke-linecap="round"/><path d="M1144.9 489.6H1187.4" stroke="#33b93a" stroke-width="5.2" fill="none" stroke-linejoin="round" stroke-linecap="round"/><path d="M1230.0 489.6H1272.6" stroke="#33b93a" stroke-width="5.2" fill="none" stroke-linejoin="round" stroke-linecap="round"/><path d="M1003.0 503.8H1045.6" stroke="#33b93a" stroke-width="5.2" fill="none" stroke-linejoin="round" stroke-linecap="round"/><path d="M1088.1 503.8H1130.7" stroke="#33b93a" stroke-width="5.2" fill="none" stroke-linejoin="round" stroke-linecap="round"/><path d="M1144.9 503.8H1187.4" stroke="#33b93a" stroke-width="5.2" fill="none" stroke-linejoin="round" stroke-linecap="round"/><path d="M1230.0 503.8H1272.6" stroke="#33b93a" stroke-width="5.2" fill="none" stroke-linejoin="round" stroke-linecap="round"/><path d="M1003.0 518.0H1045.6" stroke="#33b93a" stroke-width="5.2" fill="none" stroke-linejoin="round" stroke-linecap="round"/><path d="M1088.1 518.0H1130.7" stroke="#33b93a" stroke-width="5.2" fill="none" stroke-linejoin="round" stroke-linecap="round"/><path d="M1144.9 518.0H1187.4" stroke="#33b93a" stroke-width="5.2" fill="none" stroke-linejoin="round" stroke-linecap="round"/><path d="M1230.0 518.0H1272.6" stroke="#33b93a" stroke-width="5.2" fill="none" stroke-linejoin="round" stroke-linecap="round"/><path d="M1003.0 532.2H1045.6" stroke="#33b93a" stroke-width="5.2" fill="none" stroke-linejoin="round" stroke-linecap="round"/><path d="M1088.1 532.2H1130.7" stroke="#33b93a" stroke-width="5.2" fill="none" stroke-linejoin="round" stroke-linecap="round"/><path d="M1144.9 532.2H1187.4" stroke="#33b93a" stroke-width="5.2" fill="none" stroke-linejoin="round" stroke-linecap="round"/><path d="M1230.0 532.2H1272.6" stroke="#33b93a" stroke-width="5.2" fill="none" stroke-linejoin="round" stroke-linecap="round"/><path d="M1003.0 546.3H1045.6" stroke="#33b93a" stroke-width="5.2" fill="none" stroke-linejoin="round" stroke-linecap="round"/><path d="M1088.1 546.3H1130.7" stroke="#33b93a" stroke-width="5.2" fill="none" stroke-linejoin="round" stroke-linecap="round"/><path d="M1144.9 546.3H1187.4" stroke="#33b93a" stroke-width="5.2" fill="none" stroke-linejoin="round" stroke-linecap="round"/><path d="M1230.0 546.3H1272.6" stroke="#33b93a" stroke-width="5.2" fill="none" stroke-linejoin="round" stroke-linecap="round"/><path d="M1003.0 560.5H1045.6" stroke="#33b93a" stroke-width="5.2" fill="none" stroke-linejoin="round" stroke-linecap="round"/><path d="M1088.1 560.5H1130.7" stroke="#33b93a" stroke-width="5.2" fill="none" stroke-linejoin="round" stroke-linecap="round"/><path d="M1144.9 560.5H1187.4" stroke="#33b93a" stroke-width="5.2" fill="none" stroke-linejoin="round" stroke-linecap="round"/><path d="M1230.0 560.5H1272.6" stroke="#33b93a" stroke-width="5.2" fill="none" stroke-linejoin="round" stroke-linecap="round"/><path d="M1003.0 574.7H1045.6" stroke="#33b93a" stroke-width="5.2" fill="none" stroke-linejoin="round" stroke-linecap="round"/><path d="M1088.1 574.7H1130.7" stroke="#33b93a" stroke-width="5.2" fill="none" stroke-linejoin="round" stroke-linecap="round"/><path d="M1144.9 574.7H1187.4" stroke="#33b93a" stroke-width="5.2" fill="none" stroke-linejoin="round" stroke-linecap="round"/><path d="M1230.0 574.7H1272.6" stroke="#33b93a" stroke-width="5.2" fill="none" stroke-linejoin="round" stroke-linecap="round"/><path d="M1003.0 588.9H1045.6" stroke="#33b93a" stroke-width="5.2" fill="none" stroke-linejoin="round" stroke-linecap="round"/><path d="M1088.1 588.9H1130.7" stroke="#33b93a" stroke-width="5.2" fill="none" stroke-linejoin="round" stroke-linecap="round"/><path d="M1144.9 588.9H1187.4" stroke="#33b93a" stroke-width="5.2" fill="none" stroke-linejoin="round" stroke-linecap="round"/><path d="M1230.0 588.9H1272.6" stroke="#33b93a" stroke-width="5.2" fill="none" stroke-linejoin="round" stroke-linecap="round"/><path d="M1003.0 603.1H1045.6" stroke="#33b93a" stroke-width="5.2" fill="none" stroke-linejoin="round" stroke-linecap="round"/><path d="M1088.1 603.1H1130.7" stroke="#33b93a" stroke-width="5.2" fill="none" stroke-linejoin="round" stroke-linecap="round"/><path d="M1144.9 603.1H1187.4" stroke="#33b93a" stroke-width="5.2" fill="none" stroke-linejoin="round" stroke-linecap="round"/><path d="M1230.0 603.1H1272.6" stroke="#33b93a" stroke-width="5.2" fill="none" stroke-linejoin="round" stroke-linecap="round"/><path d="M1003.0 617.3H1045.6" stroke="#33b93a" stroke-width="5.2" fill="none" stroke-linejoin="round" stroke-linecap="round"/><path d="M1088.1 617.3H1130.7" stroke="#33b93a" stroke-width="5.2" fill="none" stroke-linejoin="round" stroke-linecap="round"/><path d="M1144.9 617.3H1187.4" stroke="#33b93a" stroke-width="5.2" fill="none" stroke-linejoin="round" stroke-linecap="round"/><path d="M1230.0 617.3H1272.6" stroke="#33b93a" stroke-width="5.2" fill="none" stroke-linejoin="round" stroke-linecap="round"/><path d="M1003.0 631.5H1045.6" stroke="#33b93a" stroke-width="5.2" fill="none" stroke-linejoin="round" stroke-linecap="round"/><path d="M1088.1 631.5H1130.7" stroke="#33b93a" stroke-width="5.2" fill="none" stroke-linejoin="round" stroke-linecap="round"/><path d="M1144.9 631.5H1187.4" stroke="#33b93a" stroke-width="5.2" fill="none" stroke-linejoin="round" stroke-linecap="round"/><path d="M1230.0 631.5H1272.6" stroke="#33b93a" stroke-width="5.2" fill="none" stroke-linejoin="round" stroke-linecap="round"/><path d="M1003.0 645.6H1045.6" stroke="#33b93a" stroke-width="5.2" fill="none" stroke-linejoin="round" stroke-linecap="round"/><path d="M1088.1 645.6H1130.7" stroke="#33b93a" stroke-width="5.2" fill="none" stroke-linejoin="round" stroke-linecap="round"/><path d="M1144.9 645.6H1187.4" stroke="#33b93a" stroke-width="5.2" fill="none" stroke-linejoin="round" stroke-linecap="round"/><path d="M1230.0 645.6H1272.6" stroke="#33b93a" stroke-width="5.2" fill="none" stroke-linejoin="round" stroke-linecap="round"/><path d="M1003.0 659.8H1045.6" stroke="#33b93a" stroke-width="5.2" fill="none" stroke-linejoin="round" stroke-linecap="round"/><path d="M1088.1 659.8H1130.7" stroke="#33b93a" stroke-width="5.2" fill="none" stroke-linejoin="round" stroke-linecap="round"/><path d="M1144.9 659.8H1187.4" stroke="#33b93a" stroke-width="5.2" fill="none" stroke-linejoin="round" stroke-linecap="round"/><path d="M1230.0 659.8H1272.6" stroke="#33b93a" stroke-width="5.2" fill="none" stroke-linejoin="round" stroke-linecap="round"/><path d="M1003.0 674.0H1045.6" stroke="#33b93a" stroke-width="5.2" fill="none" stroke-linejoin="round" stroke-linecap="round"/><path d="M1088.1 674.0H1130.7" stroke="#33b93a" stroke-width="5.2" fill="none" stroke-linejoin="round" stroke-linecap="round"/><path d="M1144.9 674.0H1187.4" stroke="#33b93a" stroke-width="5.2" fill="none" stroke-linejoin="round" stroke-linecap="round"/><path d="M1230.0 674.0H1272.6" stroke="#33b93a" stroke-width="5.2" fill="none" stroke-linejoin="round" stroke-linecap="round"/><path d="M1003.0 688.2H1045.6" stroke="#33b93a" stroke-width="5.2" fill="none" stroke-linejoin="round" stroke-linecap="round"/><path d="M1088.1 688.2H1130.7" stroke="#33b93a" stroke-width="5.2" fill="none" stroke-linejoin="round" stroke-linecap="round"/><path d="M1144.9 688.2H1187.4" stroke="#33b93a" stroke-width="5.2" fill="none" stroke-linejoin="round" stroke-linecap="round"/><path d="M1230.0 688.2H1272.6" stroke="#33b93a" stroke-width="5.2" fill="none" stroke-linejoin="round" stroke-linecap="round"/><path d="M1003.0 702.4H1045.6" stroke="#33b93a" stroke-width="5.2" fill="none" stroke-linejoin="round" stroke-linecap="round"/><path d="M1088.1 702.4H1130.7" stroke="#33b93a" stroke-width="5.2" fill="none" stroke-linejoin="round" stroke-linecap="round"/><path d="M1144.9 702.4H1187.4" stroke="#33b93a" stroke-width="5.2" fill="none" stroke-linejoin="round" stroke-linecap="round"/><path d="M1230.0 702.4H1272.6" stroke="#33b93a" stroke-width="5.2" fill="none" stroke-linejoin="round" stroke-linecap="round"/><path d="M1003.0 716.6H1045.6" stroke="#33b93a" stroke-width="5.2" fill="none" stroke-linejoin="round" stroke-linecap="round"/><path d="M1088.1 716.6H1130.7" stroke="#33b93a" stroke-width="5.2" fill="none" stroke-linejoin="round" stroke-linecap="round"/><path d="M1144.9 716.6H1187.4" stroke="#33b93a" stroke-width="5.2" fill="none" stroke-linejoin="round" stroke-linecap="round"/><path d="M1230.0 716.6H1272.6" stroke="#33b93a" stroke-width="5.2" fill="none" stroke-linejoin="round" stroke-linecap="round"/><path d="M1059.7 248V737" stroke="#33b93a" stroke-width="5.4" fill="none" stroke-linejoin="round" stroke-linecap="round"/><path d="M1073.9 262.6V737" stroke="#33b93a" stroke-width="5.4" fill="none" stroke-linejoin="round" stroke-linecap="round"/><path d="M1073.9 262.6L1080.9 254L1095 250" stroke="#4a9a4c" stroke-width="2.4" fill="none" stroke-linejoin="round" stroke-linecap="round"/><path d="M1201.6 475V737" stroke="#33b93a" stroke-width="5.4" fill="none" stroke-linejoin="round" stroke-linecap="round"/><path d="M1215.8 475V737" stroke="#33b93a" stroke-width="5.4" fill="none" stroke-linejoin="round" stroke-linecap="round"/><path d="M981 757L990 767.8H1008.4L1034.4 741.8H1051" stroke="#4a9a4c" stroke-width="2.6" fill="none" stroke-linejoin="round" stroke-linecap="round"/><path d="M991 755.4Q991 761.6 995 761.6H1006L1029.5 739.3" stroke="#4a9a4c" stroke-width="2.6" fill="none" stroke-linejoin="round" stroke-linecap="round"/><path d="M1040.4 753.2H1052" stroke="#33b93a" stroke-width="3" fill="none" stroke-linejoin="round" stroke-linecap="round"/><path d="M1040.4 753.2L1032 742" stroke="#33b93a" stroke-width="2.4" fill="none" stroke-linejoin="round" stroke-linecap="round"/><path d="M1278.6 757L1284.7 750" stroke="#33b93a" stroke-width="3.4" fill="none" stroke-linejoin="round" stroke-linecap="round"/><path d="M1278.6 757H1262" stroke="#3ea844" stroke-width="3" fill="none" stroke-linejoin="round" stroke-linecap="round"/><path d="M1126.8 749.2L1112 736" stroke="#4a9a4c" stroke-width="2" fill="none" stroke-linejoin="round" stroke-linecap="round"/><path d="M1141.7 749.2L1128 736" stroke="#4a9a4c" stroke-width="2" fill="none" stroke-linejoin="round" stroke-linecap="round"/><path d="M1157.2 749.2L1165 758L1172 772" stroke="#4a9a4c" stroke-width="2" fill="none" stroke-linejoin="round" stroke-linecap="round"/><path d="M1134.1 765.3V776" stroke="#4a9a4c" stroke-width="3" fill="none" stroke-linejoin="round" stroke-linecap="round"/><path d="M1149.6 765.3L1140 776H1132" stroke="#4a9a4c" stroke-width="3" fill="none" stroke-linejoin="round" stroke-linecap="round"/><path d="M1009.5 183.9H1057.5" stroke="#33b93a" stroke-width="4.4"/><circle cx="1033.5" cy="183.9" r="14.2" fill="#33b93a"/><circle cx="1033.5" cy="183.9" r="6.6" fill="#1d4a20"/><path d="M1211 183.9H1259" stroke="#33b93a" stroke-width="4.4"/><circle cx="1235" cy="183.9" r="14.2" fill="#33b93a"/><circle cx="1235" cy="183.9" r="6.6" fill="#1d4a20"/><path d="M1009.2 777.3H1057.2" stroke="#33b93a" stroke-width="4.4"/><circle cx="1033.2" cy="777.3" r="14.2" fill="#33b93a"/><circle cx="1033.2" cy="777.3" r="6.6" fill="#1d4a20"/><path d="M1211 777.5H1259" stroke="#33b93a" stroke-width="4.4"/><circle cx="1235" cy="777.5" r="14.2" fill="#33b93a"/><circle cx="1235" cy="777.5" r="6.6" fill="#1d4a20"/><defs><path id="pp" d="M1003.0 262.6h42.61M1088.1 262.6h42.61M1003.0 276.8h42.61M1088.1 276.8h42.61M1003.0 291.0h42.61M1088.1 291.0h42.61M1003.0 305.2h42.61M1088.1 305.2h42.61M1003.0 319.3h42.61M1088.1 319.3h42.61M1003.0 333.5h42.61M1088.1 333.5h42.61M1003.0 347.7h42.61M1088.1 347.7h42.61M1003.0 361.9h42.61M1088.1 361.9h42.61M1003.0 376.1h42.61M1088.1 376.1h42.61M1003.0 390.3h42.61M1088.1 390.3h42.61M1003.0 404.5h42.61M1088.1 404.5h42.61M1003.0 418.7h42.61M1088.1 418.7h42.61M1003.0 432.8h42.61M1088.1 432.8h42.61M1003.0 447.0h42.61M1088.1 447.0h42.61M1003.0 461.2h42.61M1088.1 461.2h42.61M1003.0 475.4h42.61M1088.1 475.4h42.61M1144.9 475.4h42.61M1230.0 475.4h42.61M1003.0 489.6h42.61M1088.1 489.6h42.61M1144.9 489.6h42.61M1230.0 489.6h42.61M1003.0 503.8h42.61M1088.1 503.8h42.61M1144.9 503.8h42.61M1230.0 503.8h42.61M1003.0 518.0h42.61M1088.1 518.0h42.61M1144.9 518.0h42.61M1230.0 518.0h42.61M1003.0 532.2h42.61M1088.1 532.2h42.61M1144.9 532.2h42.61M1230.0 532.2h42.61M1003.0 546.3h42.61M1088.1 546.3h42.61M1144.9 546.3h42.61M1230.0 546.3h42.61M1003.0 560.5h42.61M1088.1 560.5h42.61M1144.9 560.5h42.61M1230.0 560.5h42.61M1003.0 574.7h42.61M1088.1 574.7h42.61M1144.9 574.7h42.61M1230.0 574.7h42.61M1003.0 588.9h42.61M1088.1 588.9h42.61M1144.9 588.9h42.61M1230.0 588.9h42.61M1003.0 603.1h42.61M1088.1 603.1h42.61M1144.9 603.1h42.61M1230.0 603.1h42.61M1003.0 617.3h42.61M1088.1 617.3h42.61M1144.9 617.3h42.61M1230.0 617.3h42.61M1003.0 631.5h42.61M1088.1 631.5h42.61M1144.9 631.5h42.61M1230.0 631.5h42.61M1003.0 645.6h42.61M1088.1 645.6h42.61M1144.9 645.6h42.61M1230.0 645.6h42.61M1003.0 659.8h42.61M1088.1 659.8h42.61M1144.9 659.8h42.61M1230.0 659.8h42.61M1003.0 674.0h42.61M1088.1 674.0h42.61M1144.9 674.0h42.61M1230.0 674.0h42.61M1003.0 688.2h42.61M1088.1 688.2h42.61M1144.9 688.2h42.61M1230.0 688.2h42.61M1003.0 702.4h42.61M1088.1 702.4h42.61M1144.9 702.4h42.61M1230.0 702.4h42.61M1003.0 716.6h42.61M1088.1 716.6h42.61M1144.9 716.6h42.61M1230.0 716.6h42.61M1059.7 262.6v454.03M1073.9 262.6v454.03M1201.6 475.4v241.23M1215.8 475.4v241.23M1154.7 312.1h28.55M1154.7 326.3h28.55M1154.7 340.5h28.55M1154.7 354.7h28.55M1154.7 368.9h28.55M1154.7 383.1h28.55M1154.7 397.3h28.55M1154.7 411.5h28.55M1154.1 258.5v28.42M1168.1 258.5v28.42M1203.3 272.5v85.17M1245.6 258.5v99.36M1209.0 397.4v42.61M1223.2 397.4v42.61M1237.0 397.4v42.61M1258.7 411.6v28.42M1273.0 411.6v28.42M1251.3 397.4h.05"/></defs><use href="#pp" stroke="#52c45c" stroke-width="10.4" stroke-linecap="round" stroke-dasharray="0 14.187" fill="none"/><use href="#pp" stroke="#33b93a" stroke-width="8.6" stroke-linecap="round" stroke-dasharray="0 14.187" fill="none"/><use href="#pp" stroke="#0f6812" stroke-width="4.4" stroke-linecap="round" stroke-dasharray="0 14.187" fill="none"/><circle cx="1103.2" cy="196" r="5.3" fill="#52c45c"/><circle cx="1103.2" cy="196" r="4.3" fill="#33b93a"/><circle cx="1103.2" cy="196" r="2.3" fill="#0f6812"/><circle cx="1118.7" cy="196" r="5.3" fill="#52c45c"/><circle cx="1118.7" cy="196" r="4.3" fill="#33b93a"/><circle cx="1118.7" cy="196" r="2.3" fill="#0f6812"/><circle cx="1134.2" cy="196" r="5.3" fill="#52c45c"/><circle cx="1134.2" cy="196" r="4.3" fill="#33b93a"/><circle cx="1134.2" cy="196" r="2.3" fill="#0f6812"/><circle cx="1149.7" cy="196" r="5.3" fill="#52c45c"/><circle cx="1149.7" cy="196" r="4.3" fill="#33b93a"/><circle cx="1149.7" cy="196" r="2.3" fill="#0f6812"/><circle cx="1165.2" cy="196" r="5.3" fill="#52c45c"/><circle cx="1165.2" cy="196" r="4.3" fill="#33b93a"/><circle cx="1165.2" cy="196" r="2.3" fill="#0f6812"/><circle cx="1111" cy="212.3" r="5.3" fill="#52c45c"/><circle cx="1111" cy="212.3" r="4.3" fill="#33b93a"/><circle cx="1111" cy="212.3" r="2.3" fill="#0f6812"/><circle cx="1126.45" cy="212.3" r="5.3" fill="#52c45c"/><circle cx="1126.45" cy="212.3" r="4.3" fill="#33b93a"/><circle cx="1126.45" cy="212.3" r="2.3" fill="#0f6812"/><circle cx="1141.9" cy="212.3" r="5.3" fill="#52c45c"/><circle cx="1141.9" cy="212.3" r="4.3" fill="#33b93a"/><circle cx="1141.9" cy="212.3" r="2.3" fill="#0f6812"/><circle cx="1157.35" cy="212.3" r="5.3" fill="#52c45c"/><circle cx="1157.35" cy="212.3" r="4.3" fill="#33b93a"/><circle cx="1157.35" cy="212.3" r="2.3" fill="#0f6812"/><circle cx="1111" cy="749.2" r="5.3" fill="#52c45c"/><circle cx="1111" cy="749.2" r="4.3" fill="#33b93a"/><circle cx="1111" cy="749.2" r="2.3" fill="#0f6812"/><circle cx="1126.45" cy="749.2" r="5.3" fill="#52c45c"/><circle cx="1126.45" cy="749.2" r="4.3" fill="#33b93a"/><circle cx="1126.45" cy="749.2" r="2.3" fill="#0f6812"/><circle cx="1141.9" cy="749.2" r="5.3" fill="#52c45c"/><circle cx="1141.9" cy="749.2" r="4.3" fill="#33b93a"/><circle cx="1141.9" cy="749.2" r="2.3" fill="#0f6812"/><circle cx="1157.35" cy="749.2" r="5.3" fill="#52c45c"/><circle cx="1157.35" cy="749.2" r="4.3" fill="#33b93a"/><circle cx="1157.35" cy="749.2" r="2.3" fill="#0f6812"/><circle cx="1103.2" cy="765.3" r="5.3" fill="#52c45c"/><circle cx="1103.2" cy="765.3" r="4.3" fill="#33b93a"/><circle cx="1103.2" cy="765.3" r="2.3" fill="#0f6812"/><circle cx="1118.7" cy="765.3" r="5.3" fill="#52c45c"/><circle cx="1118.7" cy="765.3" r="4.3" fill="#33b93a"/><circle cx="1118.7" cy="765.3" r="2.3" fill="#0f6812"/><circle cx="1134.2" cy="765.3" r="5.3" fill="#52c45c"/><circle cx="1134.2" cy="765.3" r="4.3" fill="#33b93a"/><circle cx="1134.2" cy="765.3" r="2.3" fill="#0f6812"/><circle cx="1149.7" cy="765.3" r="5.3" fill="#52c45c"/><circle cx="1149.7" cy="765.3" r="4.3" fill="#33b93a"/><circle cx="1149.7" cy="765.3" r="2.3" fill="#0f6812"/><circle cx="1165.2" cy="765.3" r="5.3" fill="#52c45c"/><circle cx="1165.2" cy="765.3" r="4.3" fill="#33b93a"/><circle cx="1165.2" cy="765.3" r="2.3" fill="#0f6812"/><circle cx="1268.3" cy="244" r="5.6" fill="#52c45c"/><circle cx="1268.3" cy="244" r="4.6" fill="#33b93a"/><circle cx="1268.3" cy="244" r="2.4" fill="#0f6812"/><circle cx="1268.3" cy="258.5" r="5.6" fill="#52c45c"/><circle cx="1268.3" cy="258.5" r="4.6" fill="#33b93a"/><circle cx="1268.3" cy="258.5" r="2.4" fill="#0f6812"/><circle cx="1268.3" cy="272.5" r="5.6" fill="#52c45c"/><circle cx="1268.3" cy="272.5" r="4.6" fill="#33b93a"/><circle cx="1268.3" cy="272.5" r="2.4" fill="#0f6812"/><circle cx="1268.3" cy="286.7" r="5.6" fill="#52c45c"/><circle cx="1268.3" cy="286.7" r="4.6" fill="#33b93a"/><circle cx="1268.3" cy="286.7" r="2.4" fill="#0f6812"/><circle cx="996" cy="203.3" r="4.2" fill="#52c45c"/><circle cx="996" cy="203.3" r="3.2" fill="#33b93a"/><circle cx="996" cy="203.3" r="1.8" fill="#0f6812"/><circle cx="991" cy="215" r="4.2" fill="#52c45c"/><circle cx="991" cy="215" r="3.2" fill="#33b93a"/><circle cx="991" cy="215" r="1.8" fill="#0f6812"/><circle cx="1007.3" cy="214.4" r="4.2" fill="#52c45c"/><circle cx="1007.3" cy="214.4" r="3.2" fill="#33b93a"/><circle cx="1007.3" cy="214.4" r="1.8" fill="#0f6812"/><circle cx="1026.4" cy="222.7" r="4.2" fill="#52c45c"/><circle cx="1026.4" cy="222.7" r="3.2" fill="#33b93a"/><circle cx="1026.4" cy="222.7" r="1.8" fill="#0f6812"/><circle cx="1059.8" cy="248" r="4.2" fill="#52c45c"/><circle cx="1059.8" cy="248" r="3.2" fill="#33b93a"/><circle cx="1059.8" cy="248" r="1.8" fill="#0f6812"/><circle cx="1241.6" cy="225.7" r="4.2" fill="#52c45c"/><circle cx="1241.6" cy="225.7" r="3.2" fill="#33b93a"/><circle cx="1241.6" cy="225.7" r="1.8" fill="#0f6812"/><circle cx="1264" cy="225.7" r="4.2" fill="#52c45c"/><circle cx="1264" cy="225.7" r="3.2" fill="#33b93a"/><circle cx="1264" cy="225.7" r="1.8" fill="#0f6812"/><circle cx="1278.6" cy="205.7" r="4.2" fill="#52c45c"/><circle cx="1278.6" cy="205.7" r="3.2" fill="#33b93a"/><circle cx="1278.6" cy="205.7" r="1.8" fill="#0f6812"/><circle cx="1001.6" cy="749.9" r="4.2" fill="#52c45c"/><circle cx="1001.6" cy="749.9" r="3.2" fill="#33b93a"/><circle cx="1001.6" cy="749.9" r="1.8" fill="#0f6812"/><circle cx="1040.4" cy="753.2" r="4.2" fill="#52c45c"/><circle cx="1040.4" cy="753.2" r="3.2" fill="#33b93a"/><circle cx="1040.4" cy="753.2" r="1.8" fill="#0f6812"/><circle cx="1278.6" cy="757" r="4.2" fill="#52c45c"/><circle cx="1278.6" cy="757" r="3.2" fill="#33b93a"/><circle cx="1278.6" cy="757" r="1.8" fill="#0f6812"/><rect x="1177.3" y="253.7" width="9.6" height="9.6" fill="#33b93a"/><circle cx="1182.1" cy="258.5" r="2.1" fill="#0f6812"/><rect x="1177.3" y="267.7" width="9.6" height="9.6" fill="#33b93a"/><circle cx="1182.1" cy="272.5" r="2.1" fill="#0f6812"/><rect x="1177.3" y="281.9" width="9.6" height="9.6" fill="#33b93a"/><circle cx="1182.1" cy="286.7" r="2.1" fill="#0f6812"/><rect x="1198.5" y="253.7" width="9.6" height="9.6" fill="#33b93a"/><circle cx="1203.3" cy="258.5" r="2.1" fill="#0f6812"/></svg><div class="a " style="left:1366px;top:152px;width:15px;height:657px;background:#efefef;border-left:1px solid #d8d8d8;"></div><div class="a " style="left:1367px;top:169px;width:14px;height:623px;background:linear-gradient(to right,#fdfdfd,#f2f2f2);border:1px solid #c2c2c2;border-radius:2px;"></div><svg class="a" style="left:1370px;top:158px;" width="8" height="6" viewBox="0 0 8 6"><path d="M0 5.5 H8 L4 .5Z" fill="#2a2a2a"/></svg><svg class="a" style="left:1370px;top:798px;" width="8" height="6" viewBox="0 0 8 6"><path d="M0 .5 H8 L4 5.5Z" fill="#2a2a2a"/></svg><div class="a " style="left:1371px;top:477px;width:6px;height:1px;background:#bbb;"></div><div class="a " style="left:1371px;top:480px;width:6px;height:1px;background:#bbb;"></div><div class="a " style="left:1371px;top:483px;width:6px;height:1px;background:#bbb;"></div><div class="a " style="left:904px;top:811px;width:461px;height:14px;background:#ececec;border:1px solid #d4d4d4;"></div><div class="a " style="left:904px;top:811px;width:445px;height:14px;background:linear-gradient(to bottom,#fdfdfd,#eeeeee);border:1px solid #c2c2c2;border-radius:2px;"></div><svg class="a" style="left:1353px;top:813px;" width="7" height="10" viewBox="0 0 7 10"><path d="M1 1 V9 L6 5Z" fill="#333"/></svg><div class="a " style="left:1131px;top:815px;width:1px;height:6px;background:#999;"></div><div class="a " style="left:1134px;top:815px;width:1px;height:6px;background:#999;"></div><div class="a " style="left:1137px;top:815px;width:1px;height:6px;background:#999;"></div><span class="t" style="left:905.0px;top:833.8px;font-size:15px;color:#222;transform:scaleX(1.261);">(02.8, &nbsp;1212.0)</span><div class="a btn" style="left:1047px;top:828px;width:61px;height:25px;"></div><div class="a " style="left:1086px;top:830px;width:1px;height:21px;background:#c4c4c4;"></div><span class="t" style="left:1050.0px;top:833.3px;font-size:15px;color:#222;transform:scaleX(0.992);">mil</span><svg class="a" style="left:1092px;top:838px;" width="10" height="7" viewBox="0 0 10 7"><path d="M1 1 H9 L5 6Z" fill="#444"/></svg><div class="a " style="left:40px;top:562px;width:545px;height:435px;background:#1a1c20;border-radius:6px 6px 0 0;box-shadow:0 2px 12px rgba(0,0,0,.45);"></div><div class="a " style="left:42px;top:563px;width:541px;height:27px;background:linear-gradient(to bottom,#151515 0,#262626 45%,#3a3a3a 75%,#5e5e5e 100%);border-radius:5px 5px 0 0;"></div><div class="a " style="left:43px;top:573px;width:540px;height:1px;background:rgba(0,0,0,.5);"></div><div class="a " style="left:43px;top:582px;width:540px;height:1px;background:rgba(0,0,0,.4);"></div><svg class="a" style="left:46px;top:569px;" width="15" height="16" viewBox="0 0 15 16"><rect x="1" y="1" width="13" height="14" rx="1.5" fill="#e8a838" stroke="#8a5a10"/><path d="M2 6 H13 M2 10.5 H13" stroke="#8a5a10"/><rect x="5.5" y="3" width="4" height="1.5" fill="#8a5a10"/><rect x="5.5" y="7.5" width="4" height="1.5" fill="#8a5a10"/></svg><span class="t" style="left:63.0px;top:568.4px;font-size:15.5px;color:#f4f4f4;transform:scaleX(0.986);font-weight:bold;">gEDA &nbsp;- &nbsp;File &nbsp;Browser</span><div class="a " style="left:486px;top:563px;width:24px;height:15px;background:linear-gradient(to bottom,#c4ccd8 0,#98a8c0 44%,#1c5c9c 52%,#2a8ccc 100%);border:1px solid #1a2a3a;border-top:none;border-radius:0 0 0 4px;"></div><div class="a " style="left:493px;top:571px;width:11px;height:3px;background:#e8fcfc;border:1px solid rgba(0,0,0,.35);"></div><div class="a " style="left:511px;top:563px;width:24px;height:15px;background:linear-gradient(to bottom,#c4ccd8 0,#98a8c0 44%,#1c5c9c 52%,#2a8ccc 100%);border:1px solid #1a2a3a;border-top:none;border-radius:0;"></div><div class="a " style="left:518px;top:566px;width:11px;height:9px;border:1.5px solid #e8fcfc;border-top-width:3px;"></div><div class="a " style="left:536px;top:563px;width:40px;height:15px;background:linear-gradient(to bottom,#e4d0c8 0,#d0a898 44%,#c03c14 52%,#d24e1e 100%);border:1px solid #1a2a3a;border-top:none;border-radius:0 0 4px 0;"></div><svg class="a" style="left:550px;top:565px;" width="12" height="11" viewBox="0 0 12 11"><path d="M2 1.5 L10 9.5 M10 1.5 L2 9.5" stroke="#e8fcfc" stroke-width="2.6" stroke-linecap="round"/></svg><div class="mb" style="left:44px;top:590px;width:536px;height:27px;background:linear-gradient(to right,#184e80 0,#1a5686 100%);"><div class="gloss"></div></div><span class="t" style="left:52.0px;top:597.3px;font-size:15px;color:#e6f0f6;transform:scaleX(0.869);"><u>F</u>ile</span><span class="t" style="left:86.0px;top:597.3px;font-size:15px;color:#e6f0f6;transform:scaleX(1.006);"><u>E</u>dit</span><span class="t" style="left:125.0px;top:597.3px;font-size:15px;color:#e6f0f6;transform:scaleX(1.055);"><u>V</u>iew</span><span class="t" style="left:172.0px;top:597.3px;font-size:15px;color:#e6f0f6;transform:scaleX(1.000);"><u>G</u>o</span><span class="t" style="left:205.0px;top:597.3px;font-size:15px;color:#e6f0f6;transform:scaleX(1.080);"><u>B</u>ookmarks</span><span class="t" style="left:299.0px;top:597.3px;font-size:15px;color:#e6f0f6;transform:scaleX(1.005);"><u>H</u>elp</span><div class="a " style="left:44px;top:617px;width:537px;height:57px;background:linear-gradient(to bottom,#fefefe 0,#fdfdfd 22%,#ededee 30%,#e6e7e9 100%);border-bottom:1px solid #c4c6c8;"></div><span class="t" style="left:47.0px;top:613.3px;font-size:15px;color:#eeeeee;transform:scaleX(1.084);">Pick | Stroke | Menu/Cancel</span><span class="t" style="left:270.0px;top:613.3px;font-size:15px;color:#eeeeee;transform:scaleX(1.137);">Grid(100, 500)</span><div class="a " style="left:44px;top:628px;width:537px;height:8px;background:linear-gradient(to bottom,rgba(253,253,253,0),#f0f0f1);"></div><svg class="a" style="left:56px;top:627px;" width="20" height="19" viewBox="0 0 20 19"><path d="M1 9.5 L10 1 V5.5 H19 V13.5 H10 V18Z" fill="#6cc028" stroke="#3c7a10" stroke-width="1.2" stroke-linejoin="round"/></svg><svg class="a" style="left:140px;top:627px;" width="20" height="19" viewBox="0 0 20 19"><path d="M19 9.5 L10 1 V5.5 H1 V13.5 H10 V18Z" fill="#9aa890" stroke="#6a7a60" stroke-width="1.2" stroke-linejoin="round"/></svg><svg class="a" style="left:240px;top:627px;" width="20" height="19" viewBox="0 0 20 19"><path d="M10 1 L19 10 H14.5 V18 H5.5 V10 H1Z" fill="#6cc028" stroke="#3c7a10" stroke-width="1.2" stroke-linejoin="round"/></svg><svg class="a" style="left:322px;top:626px;" width="22" height="22" viewBox="0 0 22 22"><path d="M7 1 H15 L21 7 V15 L15 21 H7 L1 15 V7Z" fill="#c07078" stroke="#985058" stroke-width="1.2"/><path d="M7.5 7.5 L14.5 14.5 M14.5 7.5 L7.5 14.5" stroke="#f0d8d8" stroke-width="2.2"/></svg><svg class="a" style="left:405px;top:626px;" width="22" height="22" viewBox="0 0 22 22"><rect x="4" y="2" width="14" height="18" fill="#e8eef6" stroke="#9ab" stroke-width=".8"/><path d="M3 10 Q3 3 11 3 L16 3 V0.5 L21 5 L16 9.5 V7 H11 Q7 7 7 10Z" fill="#5a90d0" stroke="#2a5a98" stroke-width=".9"/><path d="M19 12 Q19 19 11 19 L6 19 V21.5 L1 17 L6 12.5 V15 H11 Q15 15 15 12Z" fill="#5a90d0" stroke="#2a5a98" stroke-width=".9"/></svg><svg class="a" style="left:499px;top:627px;" width="23" height="20" viewBox="0 0 23 20"><path d="M1 3 H8 L10 5 H18 V8 H1Z" fill="#7a96c4" stroke="#4a6a9a" stroke-width=".8"/><rect x="2" y="6" width="19" height="13" rx="1" fill="#6a8cc8" stroke="#3a5a9a" stroke-width="1"/><circle cx="11.5" cy="12.5" r="2.6" fill="#c8d8f0"/></svg><span class="t" style="left:49.0px;top:651.3px;font-size:15px;color:#222;transform:scaleX(1.050);">Back</span><span class="t" style="left:119.0px;top:651.3px;font-size:15px;color:#a8a8a8;transform:scaleX(1.091);">Forward</span><span class="t" style="left:240.0px;top:651.3px;font-size:15px;color:#222;transform:scaleX(0.991);">Up</span><span class="t" style="left:316.0px;top:651.3px;font-size:15px;color:#a8a8a8;transform:scaleX(1.070);">Stop</span><span class="t" style="left:392.0px;top:651.3px;font-size:15px;color:#222;transform:scaleX(1.010);">Reload</span><span class="t" style="left:489.0px;top:651.3px;font-size:15px;color:#222;transform:scaleX(1.075);">Home</span><svg class="a" style="left:97px;top:645px;" width="9" height="6" viewBox="0 0 9 6"><path d="M.5 .5 H8.5 L4.5 5.5Z" fill="#445"/></svg><svg class="a" style="left:192px;top:645px;" width="9" height="6" viewBox="0 0 9 6"><path d="M.5 .5 H8.5 L4.5 5.5Z" fill="#445"/></svg><svg class="a" style="left:563px;top:645px;" width="9" height="6" viewBox="0 0 9 6"><path d="M.5 .5 H8.5 L4.5 5.5Z" fill="#445"/></svg><div class="sep" style="left:463px;top:625px;height:42px;background:#c8cacc"></div><div class="a " style="left:44px;top:674px;width:537px;height:41px;background:linear-gradient(to bottom,#eeeff0,#e2e4e6);border-bottom:1px solid #c8cacc;"></div><div class="a " style="left:49px;top:682px;width:25px;height:27px;background:linear-gradient(to bottom,#7db4e0,#4a8cc4);border:1px solid #2a5a8a;border-radius:3px;"></div><svg class="a" style="left:54px;top:686px;" width="16" height="19" viewBox="0 0 16 19"><path d="M1 1 H11 L15 5 V18 H1Z" fill="#f8f8f4" stroke="#777" stroke-width=".9"/><path d="M3 6 H9 M3 9 H10 M3 12 H8" stroke="#999" stroke-width="1"/><path d="M6 14 L12 5 L14.5 6.8 L8.5 15.5 L5.5 16.5Z" fill="#f09a30" stroke="#a05a10" stroke-width=".6"/></svg><span class="t" style="left:94.0px;top:688.3px;font-size:15px;color:#222;transform:scaleX(1.068);">Location:</span><div class="a " style="left:168px;top:683px;width:162px;height:26px;background:#fbfbfb;border:1px solid #b4b6b8;border-radius:3px;"></div><span class="t" style="left:174.0px;top:688.3px;font-size:15px;color:#111;transform:scaleX(1.079);">/home/pcjc2/gEDA</span><svg class="a" style="left:343px;top:687px;" width="17" height="17" viewBox="0 0 17 17"><path d="M10 10 L15 15" stroke="#555" stroke-width="2.8" stroke-linecap="round"/><circle cx="6.5" cy="6.5" r="5.3" fill="#8aa8d4" stroke="#6a7a98" stroke-width="1.1"/><path d="M3.8 6.5 H9.2" stroke="#fff" stroke-width="1.6"/></svg><svg class="a" style="left:423px;top:687px;" width="17" height="17" viewBox="0 0 17 17"><path d="M10 10 L15 15" stroke="#555" stroke-width="2.8" stroke-linecap="round"/><circle cx="6.5" cy="6.5" r="5.3" fill="#8aa8d4" stroke="#6a7a98" stroke-width="1.1"/><path d="M3.8 6.5 H9.2" stroke="#fff" stroke-width="1.6"/><path d="M6.5 3.8 V9.2" stroke="#fff" stroke-width="1.6"/></svg><span class="t" style="left:370.0px;top:688.3px;font-size:15px;color:#333;transform:scaleX(1.121);">100%</span><div class="a " style="left:44px;top:715px;width:537px;height:258px;background:linear-gradient(100deg,#e2e5e8 0,#e9ebee 35%,#eef0f2 55%,#e4e7ea 80%,#dfe3e7 100%);"></div><div class="a " style="left:470px;top:715px;width:60px;height:258px;background:linear-gradient(100deg,rgba(255,255,255,0) 0,rgba(255,255,255,.55) 50%,rgba(255,255,255,0) 100%);transform:skewX(-14deg);"></div><svg class="a" style="left:107px;top:722px;" width="37" height="43" viewBox="0 0 37 43"><path d="M1 1 H29 L36 8 V42 H1Z" fill="#ececec" stroke="#9a9a9a" stroke-width="1.2"/><path d="M29 1 V8 H36" fill="#fff" stroke="#9a9a9a" stroke-width="1"/><text x="3" y="13" font-family="Liberation Mono, monospace" font-size="8.5" font-weight="bold" fill="#222"># Pir</text><text x="3" y="37" font-family="Liberation Mono, monospace" font-size="8.5" font-weight="bold" fill="#222"># Sta</text></svg><svg class="a" style="left:274px;top:719px;" width="32" height="36" viewBox="0 0 32 36"><path d="M8 6 L20 0 L31 10 L26 34 L6 30Z" fill="#5ab030" stroke="#3a8018"/><circle cx="17" cy="8" r="2.2" fill="#e8f4d8"/><circle cx="23" cy="11" r="2.2" fill="#e8f4d8"/><circle cx="26" cy="20" r="1.6" fill="#e8f4d8"/></svg><svg class="a" style="left:256px;top:732px;" width="42" height="33" viewBox="0 0 42 33"><path d="M1 3 Q1 1 3 1 H34 L41 8 V30 Q41 32 39 32 H3 Q1 32 1 30Z" fill="#e4e6e6" stroke="#a0a0a0" stroke-width="1.2"/><path d="M34 1 V8 H41" fill="#f6f6f6" stroke="#a8a8a8" stroke-width=".9"/><rect x="3.8" y="3.8" width="34.4" height="25.4" fill="#dcdede" stroke="#c2c4c4" stroke-width=".8"/><g stroke="#5c5c5c" stroke-width=".9" fill="none"><path d="M13 5 V8 M13 15 V19 H24 M9 10.5 H11 M9 12.5 H11"/><rect x="11.6" y="8" width="2.8" height="7" fill="#eee"/><path d="M9 23.5 H12.5 M12.5 20.5 V26.5 M12.5 22.5 L15.5 20.5 M12.5 24.5 L15.5 27 V29"/><path d="M24 13.5 V22.5 M24 15.5 L27.5 12.5 V10.5 H31 M24 20.5 L27.5 23 V27 M29 14.5 H31.5 M29 16.5 H31.5"/><rect x="31" y="9" width="5" height="2.8" fill="#eee"/><rect x="28.5" y="22" width="9.5" height="6.2" fill="#eee"/><path d="M30 24 H33 M34 24 H36.5 M30 26 H36.5"/></g></svg><svg class="a" style="left:262px;top:726px;" width="10" height="22" viewBox="0 0 10 22"><path d="M3 2 Q8 2 7 8 L5 18 Q4 21 2 19 L4 8" fill="none" stroke="#9aa" stroke-width="1.6"/></svg><svg class="a" style="left:417px;top:722px;" width="37" height="43" viewBox="0 0 37 43"><path d="M1 1 H29 L36 8 V42 H1Z" fill="#ececec" stroke="#9a9a9a" stroke-width="1.2"/><path d="M29 1 V8 H36" fill="#fff" stroke="#9a9a9a" stroke-width="1"/><g stroke="#7a9ac8" stroke-width="1.3"><path d="M5 9 H15 M7 13 H15 M7 17 H15 M5 22 H15 M7 26 H15 M7 30 H15 M7 35 H15"/></g><g stroke="#aaa" stroke-width="1"><path d="M18 11 H26 M18 15 H28 M18 24 H27 M18 28 H25 M18 33 H27"/></g></svg><svg class="a" style="left:107px;top:802px;" width="37" height="42" viewBox="0 0 37 42"><rect x="1" y="1" width="35" height="40" fill="#4aa818" stroke="#c8dcc0" stroke-width="1.5"/><rect x="2.5" y="2.5" width="32" height="37" fill="none" stroke="#2a7a08" stroke-width="1"/><path d="M8 6 V14 M13 4 V14 M18 4 V14 M23 6 V14 M28 8 V14" stroke="#3a9010" stroke-width="1.5"/><rect x="12" y="17" width="19" height="15" rx="2" fill="none" stroke="#d8f0c0" stroke-width="1.4"/><path d="M15 20 V23 M19 20 V23 M23 20 V23 M27 20 V23 M15 26 V29 M19 26 V29 M23 26 V29 M27 26 V29" stroke="#d8f0c0" stroke-width="1.6"/></svg><svg class="a" style="left:259px;top:809px;" width="42" height="33" viewBox="0 0 42 33"><path d="M1 3 Q1 1 3 1 H34 L41 8 V30 Q41 32 39 32 H3 Q1 32 1 30Z" fill="#e4e6e6" stroke="#a0a0a0" stroke-width="1.2"/><path d="M34 1 V8 H41" fill="#f6f6f6" stroke="#a8a8a8" stroke-width=".9"/><rect x="3.8" y="3.8" width="34.4" height="25.4" fill="#dcdede" stroke="#c2c4c4" stroke-width=".8"/><g stroke="#5c5c5c" stroke-width=".9" fill="none"><path d="M13 5 V8 M13 15 V19 H24 M9 10.5 H11 M9 12.5 H11"/><rect x="11.6" y="8" width="2.8" height="7" fill="#eee"/><path d="M9 23.5 H12.5 M12.5 20.5 V26.5 M12.5 22.5 L15.5 20.5 M12.5 24.5 L15.5 27 V29"/><path d="M24 13.5 V22.5 M24 15.5 L27.5 12.5 V10.5 H31 M24 20.5 L27.5 23 V27 M29 14.5 H31.5 M29 16.5 H31.5"/><rect x="31" y="9" width="5" height="2.8" fill="#eee"/><rect x="28.5" y="22" width="9.5" height="6.2" fill="#eee"/><path d="M30 24 H33 M34 24 H36.5 M30 26 H36.5"/></g></svg><svg class="a" style="left:414px;top:809px;" width="42" height="33" viewBox="0 0 42 33"><path d="M1 3 Q1 1 3 1 H34 L41 8 V30 Q41 32 39 32 H3 Q1 32 1 30Z" fill="#e4e6e6" stroke="#a0a0a0" stroke-width="1.2"/><path d="M34 1 V8 H41" fill="#f6f6f6" stroke="#a8a8a8" stroke-width=".9"/><rect x="3.8" y="3.8" width="34.4" height="25.4" fill="#dcdede" stroke="#c2c4c4" stroke-width=".8"/><g stroke="#5c5c5c" stroke-width=".9" fill="none"><path d="M13 5 V8 M13 15 V19 H24 M9 10.5 H11 M9 12.5 H11"/><rect x="11.6" y="8" width="2.8" height="7" fill="#eee"/><path d="M9 23.5 H12.5 M12.5 20.5 V26.5 M12.5 22.5 L15.5 20.5 M12.5 24.5 L15.5 27 V29"/><path d="M24 13.5 V22.5 M24 15.5 L27.5 12.5 V10.5 H31 M24 20.5 L27.5 23 V27 M29 14.5 H31.5 M29 16.5 H31.5"/><rect x="31" y="9" width="5" height="2.8" fill="#eee"/><rect x="28.5" y="22" width="9.5" height="6.2" fill="#eee"/><path d="M30 24 H33 M34 24 H36.5 M30 26 H36.5"/></g></svg><svg class="a" style="left:105px;top:881px;" width="41" height="40" viewBox="0 0 41 40"><path d="M3 1 H30 L38 9 V32 H3Z" fill="#e4e4e4" stroke="#9a9a9a" stroke-width="1.2"/><path d="M30 1 V9 H38" fill="#fff" stroke="#9a9a9a"/><path d="M7 30 V10 Q7 5 13 5 H16 V30Z" fill="#a8a8a8"/><path d="M19 6 V22 M23 6 V24 M27 8 V22 M31 12 V24 M34 14 V22" stroke="#999" stroke-width="2.2"/><path d="M19 24 V30 M23 26 V30 M27 24 V30 M31 26 V30" stroke="#bbb" stroke-width="1.4"/><rect x=".5" y="32" width="40" height="7" fill="#f0d020" stroke="#a89010" stroke-width="1"/><path d="M4 32 V36 M8 32 V35 M12 32 V36 M16 32 V35 M20 32 V36 M24 32 V35 M28 32 V36 M32 32 V35 M36 32 V36" stroke="#806c08" stroke-width=".8"/></svg><svg class="a" style="left:260px;top:881px;" width="41" height="40" viewBox="0 0 41 40"><path d="M3 1 H30 L38 9 V32 H3Z" fill="#e4e4e4" stroke="#9a9a9a" stroke-width="1.2"/><path d="M30 1 V9 H38" fill="#fff" stroke="#9a9a9a"/><path d="M7 30 V10 Q7 5 13 5 H16 V30Z" fill="#a8a8a8"/><path d="M19 6 V22 M23 6 V24 M27 8 V22 M31 12 V24 M34 14 V22" stroke="#999" stroke-width="2.2"/><path d="M19 24 V30 M23 26 V30 M27 24 V30 M31 26 V30" stroke="#bbb" stroke-width="1.4"/><rect x=".5" y="32" width="40" height="7" fill="#f0d020" stroke="#a89010" stroke-width="1"/><path d="M4 32 V36 M8 32 V35 M12 32 V36 M16 32 V35 M20 32 V36 M24 32 V35 M28 32 V36 M32 32 V35 M36 32 V36" stroke="#806c08" stroke-width=".8"/></svg><svg class="a" style="left:415px;top:881px;" width="41" height="40" viewBox="0 0 41 40"><rect x="4" y="1" width="33" height="31" fill="#c8a820" stroke="#8a7210" stroke-width="1.2"/><circle cx="10" cy="8" r="1.9" fill="#3a2a08"/><circle cx="10" cy="15" r="1.9" fill="#3a2a08"/><circle cx="10" cy="22" r="1.9" fill="#3a2a08"/><circle cx="10" cy="29" r="1.9" fill="#3a2a08"/><circle cx="25" cy="8" r="1.9" fill="#3a2a08"/><circle cx="25" cy="15" r="1.9" fill="#3a2a08"/><circle cx="25" cy="22" r="1.9" fill="#3a2a08"/><circle cx="25" cy="29" r="1.9" fill="#3a2a08"/><circle cx="32" cy="8" r="1.9" fill="#3a2a08"/><circle cx="32" cy="15" r="1.9" fill="#3a2a08"/><circle cx="32" cy="22" r="1.9" fill="#3a2a08"/><circle cx="32" cy="29" r="1.9" fill="#3a2a08"/><path d="M21 0 L10 26" stroke="#b8b8b8" stroke-width="4"/><path d="M21 0 L10 26" stroke="#777" stroke-width="1"/><rect x=".5" y="32" width="40" height="7" fill="#f0d020" stroke="#a89010" stroke-width="1"/><path d="M4 32 V36 M8 32 V35 M12 32 V36 M16 32 V35 M20 32 V36 M24 32 V35 M28 32 V36 M32 32 V35 M36 32 V36" stroke="#806c08" stroke-width=".8"/></svg><span class="t" style="left:87.0px;top:770.9px;font-size:15px;color:#111;transform:scaleX(1.102);">circuit.cmd</span><span class="t" style="left:222.3px;top:770.9px;font-size:15px;color:#111;transform:scaleX(1.088);">circuit.gsch2pcb</span><span class="t" style="left:400.5px;top:770.9px;font-size:15px;color:#111;transform:scaleX(1.106);">circuit.net</span><span class="t" style="left:89.6px;top:849.7px;font-size:15px;color:#111;transform:scaleX(1.081);">circuit.pcb</span><span class="t" style="left:231.5px;top:849.7px;font-size:15px;color:#111;transform:scaleX(1.079);">circuit-i2c.sch</span><span class="t" style="left:391.3px;top:849.7px;font-size:15px;color:#111;transform:scaleX(1.068);">circuit-io.sch</span><span class="t" style="left:66.6px;top:928.6px;font-size:15px;color:#111;transform:scaleX(1.124);">outout_front.gbr</span><span class="t" style="left:221.2px;top:928.6px;font-size:15px;color:#111;transform:scaleX(1.097);">output_back.gbr</span><span class="t" style="left:382.4px;top:928.6px;font-size:15px;color:#111;transform:scaleX(1.059);">plated_drill.cnc</span><div class="a " style="left:44px;top:973px;width:537px;height:22px;background:linear-gradient(to bottom,#eceeef,#e0e2e4);border-top:1px solid #d0d2d4;"></div><span class="t" style="left:44.0px;top:976.3px;font-size:15px;color:#333;transform:scaleX(1.118);">9 items, Free space: 37.3 GB</span><div class="a " style="left:514px;top:683px;width:405px;height:329px;background:#2a2c30;border:1px solid #1a1a1a;border-radius:6px 6px 0 0;box-shadow:0 2px 12px rgba(0,0,0,.45);"></div><div class="a " style="left:515px;top:684px;width:403px;height:27px;background:linear-gradient(to bottom,#7d8086 0,#6e7176 50%,#5c5f64 100%);border-radius:5px 5px 0 0;"></div><div class="a " style="left:515px;top:684px;width:67px;height:27px;background:linear-gradient(to bottom,#9a9c9e,#7a7c7e);border-radius:5px 0 0 0;"></div><div class="a " style="left:584px;top:684px;width:68px;height:27px;background:#2c3e54;"></div><div class="a " style="left:652px;top:684px;width:266px;height:27px;background:linear-gradient(to bottom,#9d9d9d 0,#8c8c8c 60%,#7c7c7c 100%);border-radius:0 5px 0 0;"></div><div class="a " style="left:866px;top:684px;width:1px;height:27px;background:rgba(0,0,0,.3);"></div><div class="a " style="left:874px;top:684px;width:1px;height:27px;background:rgba(0,0,0,.3);"></div><div class="a " style="left:887px;top:684px;width:1px;height:27px;background:rgba(0,0,0,.3);"></div><div class="a " style="left:875px;top:684px;width:12px;height:27px;background:rgba(255,255,255,.12);"></div><div class="a " style="left:903px;top:684px;width:15px;height:27px;background:#0c0c0c;"></div><svg class="a" style="left:522px;top:694px;" width="13" height="13" viewBox="0 0 13 13"><rect x=".5" y="1.5" width="12" height="11" fill="#7ab840" stroke="#e8f0d8" stroke-width=".8"/><rect x="1" y="1" width="4" height="5" fill="#f4f4e8"/><path d="M7 4 V10 M10 5 V9" stroke="#d8f0b8"/></svg><span class="t" style="left:538.0px;top:690.8px;font-size:15px;color:#c6c6c6;transform:scaleX(0.969);font-weight:bold;">robot.gsch2pcb &nbsp;- &nbsp;xgsch2pcb</span><div class="a " style="left:822px;top:685px;width:24px;height:15px;background:linear-gradient(to bottom,#8a8a8a 0,#6a6a6a 48%,#3e3e3e 52%,#585858 100%);border:1px solid #8e8e8e;border-top:none;border-radius:0 0 0 4px;"></div><div class="a " style="left:829px;top:693px;width:11px;height:3px;background:#c0c0c0;border:1px solid rgba(0,0,0,.35);"></div><div class="a " style="left:847px;top:685px;width:24px;height:15px;background:linear-gradient(to bottom,#8a8a8a 0,#6a6a6a 48%,#3e3e3e 52%,#585858 100%);border:1px solid #8e8e8e;border-top:none;border-radius:0;"></div><div class="a " style="left:854px;top:688px;width:11px;height:9px;border:1.5px solid #c0c0c0;border-top-width:3px;"></div><div class="a " style="left:872px;top:685px;width:40px;height:15px;background:linear-gradient(to bottom,#8a8a8a 0,#6a6a6a 48%,#3e3e3e 52%,#585858 100%);border:1px solid #8e8e8e;border-top:none;border-radius:0 0 4px 0;"></div><svg class="a" style="left:886px;top:687px;" width="12" height="11" viewBox="0 0 12 11"><path d="M2 1.5 L10 9.5 M10 1.5 L2 9.5" stroke="#c0c0c0" stroke-width="2.6" stroke-linecap="round"/></svg><div class="a " style="left:518px;top:711px;width:400px;height:299px;background:#f2f2f2;"></div><div class="tb" style="left:518px;top:711px;width:400px;height:56px;border-bottom:1px solid #c8c8c8;"></div><svg class="a" style="left:533px;top:718px;" width="24" height="24" viewBox="0 0 24 24"><defs><linearGradient id="dg" x1="0" y1="0" x2="1" y2="1"><stop offset="0" stop-color="#3a7a4a"/><stop offset="1" stop-color="#0a2410"/></linearGradient></defs><rect x="9" y="1" width="14" height="22" fill="url(#dg)" stroke="#1a1a1a" stroke-width="1"/><path d="M10 2 L16 4.5 V21 L10 22Z" fill="#d8e4dc"/><path d="M1 9 H8 V5 L15.5 12 L8 19 V15 H1Z" fill="#e81414" stroke="#900808" stroke-width="1"/></svg><svg class="a" style="left:601px;top:720px;" width="19" height="20" viewBox="0 0 19 21"><rect x="1" y="1" width="17" height="19" fill="#f4f4f2" stroke="#888" stroke-width="1"/><rect x="2.5" y="2.5" width="14" height="16" fill="#e4e4e2"/><path d="M14 1 L18 1 L18 5Z" fill="#f8e070"/></svg><svg class="a" style="left:651px;top:719px;" width="24" height="21" viewBox="0 0 23 20"><path d="M1.5 3 H7 L9 5 H19 V17 H1.5Z" fill="#90949a" stroke="#5a5e64" stroke-width=".9"/><path d="M4 2.5 L17.5 1.5 L18 11 H4Z" fill="#f8f8f8" stroke="#a4a4a4" stroke-width=".7"/><path d="M6 5 L15.5 4.3 M6 7.2 L15.8 6.6" stroke="#bbb" stroke-width=".8"/><path d="M2.6 18.8 L1.2 10.6 L4.5 9.2 H22 L20.2 18.8Z" fill="#5e96d8" stroke="#2c5fa2" stroke-width="1"/><path d="M3 11.2 L5 10.4 H20.5" stroke="#a6c8f0" stroke-width="1" fill="none"/></svg><svg class="a" style="left:703px;top:718px;" width="24" height="24" viewBox="0 0 23 22"><path d="M2 12 L5 6 H18 L21 12 V21 H2Z" fill="#dcdcdc" stroke="#777" stroke-width="1"/><rect x="4" y="15" width="15" height="4" fill="#bbb" stroke="#888" stroke-width=".6"/><path d="M8 1 Q15 0 15.5 8 H19 L12.5 14 L6 8 H10 Q10 4 7 3Z" fill="#3a80c0" stroke="#1a4f88" stroke-width=".9"/></svg><svg class="a" style="left:759px;top:721px;" width="20" height="19" viewBox="0 0 20 19"><path d="M3 3 L17 16 M17 3 L3 16" stroke="#6a6a6a" stroke-width="4.2" stroke-linecap="round"/><path d="M3 3 L17 16 M17 3 L3 16" stroke="#8a8a8a" stroke-width="2" stroke-linecap="round"/></svg><svg class="a" style="left:823px;top:719px;" width="22" height="22" viewBox="0 0 22 22"><path d="M11 1 Q12 8 21 11 Q12 13 11 21 Q10 13 1 11 Q10 8 11 1Z" fill="#f4dc48" stroke="#c8a818" stroke-width="1"/><path d="M11 5 Q11.5 9.5 16 11 Q11.5 12 11 16 Q10.5 12 6 11 Q10.5 9.5 11 5Z" fill="#fdf4a8"/></svg><div class="sep" style="left:578px;top:722px;height:38px;background:#e0e0e0"></div><div class="sep" style="left:801px;top:722px;height:38px;background:#e0e0e0"></div><span class="t" style="left:530.0px;top:744.3px;font-size:15px;color:#2a2a2a;transform:scaleX(1.054);">Quit</span><span class="t" style="left:594.0px;top:744.3px;font-size:15px;color:#2a2a2a;transform:scaleX(1.066);">New</span><span class="t" style="left:644.0px;top:744.3px;font-size:15px;color:#2a2a2a;transform:scaleX(1.063);">Open</span><span class="t" style="left:698.0px;top:744.3px;font-size:15px;color:#2a2a2a;transform:scaleX(1.024);">Save</span><span class="t" style="left:750.0px;top:744.3px;font-size:15px;color:#2a2a2a;transform:scaleX(0.991);">Close</span><span class="t" style="left:813.0px;top:744.3px;font-size:15px;color:#2a2a2a;transform:scaleX(1.072);">About</span><div class="a " style="left:519px;top:785px;width:196px;height:226px;border:1px solid #c8c4bc;border-bottom:none;"></div><div class="a " style="left:520px;top:775px;width:130px;height:16px;background:#f2f2f2;"></div><span class="t" style="left:522.0px;top:774.8px;font-size:15px;color:#222;transform:scaleX(1.086);">Schematic pages</span><div class="a " style="left:719px;top:785px;width:197px;height:226px;border:1px solid #c8c8c8;border-bottom:none;"></div><div class="a " style="left:722px;top:775px;width:53px;height:16px;background:#f2f2f2;"></div><span class="t" style="left:724.0px;top:774.8px;font-size:15px;color:#222;transform:scaleX(1.066);">Layout</span><div class="a " style="left:524px;top:797px;width:185px;height:124px;background:#fff;border:1px solid #8a8a8a;"></div><div class="a " style="left:525px;top:798px;width:183px;height:27px;background:#b2dcf6;"></div><span class="t" style="left:529.0px;top:803.3px;font-size:15px;color:#223;transform:scaleX(1.097);">robot-io.sch</span><span class="t" style="left:529.0px;top:830.3px;font-size:15px;color:#111;transform:scaleX(1.106);">robot-i2c.sch</span><div class="a btn" style="left:525px;top:925px;width:90px;height:24px;"></div><div class="a btn" style="left:617px;top:925px;width:92px;height:24px;"></div><div class="a btn" style="left:525px;top:953px;width:184px;height:24px;"></div><div class="a btn" style="left:525px;top:981px;width:184px;height:24px;"></div><svg class="a" style="left:548px;top:930px;" width="13" height="13" viewBox="0 0 13 13"><path d="M4.5 1 H8.5 V4.5 H12 V8.5 H8.5 V12 H4.5 V8.5 H1 V4.5 H4.5Z" fill="#7a9cd8" stroke="#3a5a9a" stroke-width="1"/></svg><span class="t" style="left:565.0px;top:928.8px;font-size:15px;color:#222;transform:scaleX(1.049);"><u>A</u>dd</span><svg class="a" style="left:626px;top:934px;" width="12" height="6" viewBox="0 0 12 6"><rect x=".5" y=".5" width="11" height="4.5" fill="#7a9cd8" stroke="#3a5a9a"/></svg><span class="t" style="left:642.0px;top:928.8px;font-size:15px;color:#222;transform:scaleX(1.056);"><u>R</u>emove</span><svg class="a" style="left:557px;top:957px;" width="14" height="15" viewBox="0 0 14 15"><path d="M1 1 H9 L12 4 V14 H1Z" fill="#f8f8f4" stroke="#777" stroke-width=".9"/><path d="M3 5 H8 M3 8 H9 M3 11 H7" stroke="#aaa"/><path d="M5 11 L10.5 3 L13 4.7 L7.5 12.5 L4.8 13.3Z" fill="#f09a30" stroke="#a05a10" stroke-width=".6"/></svg><span class="t" style="left:572.0px;top:956.8px;font-size:15px;color:#222;transform:scaleX(1.087);">Edit schematic</span><svg class="a" style="left:559px;top:985px;" width="14" height="15" viewBox="0 0 14 15"><path d="M1 1 H9 L12 4 V14 H1Z" fill="#f8f8f4" stroke="#777" stroke-width=".9"/><path d="M3 5 H8 M3 8 H9 M3 11 H7" stroke="#aaa"/><path d="M5 11 L10.5 3 L13 4.7 L7.5 12.5 L4.8 13.3Z" fill="#f09a30" stroke="#a05a10" stroke-width=".6"/></svg><span class="t" style="left:574.0px;top:984.8px;font-size:15px;color:#222;transform:scaleX(1.112);">Edit attributes</span><div class="a " style="left:726px;top:797px;width:186px;height:27px;background:#eeeeee;border:1px solid #cfcfcf;border-radius:3px;"></div><span class="t" style="left:732.0px;top:802.8px;font-size:15px;color:#a4a4a4;transform:scaleX(1.119);">robot.pcb</span><div class="a btn" style="left:726px;top:827px;width:186px;height:25px;background:linear-gradient(#f4f4f4,#e6e6e6);border-color:#bdbdbd;"></div><div class="a btn" style="left:726px;top:855px;width:186px;height:25px;background:linear-gradient(#f4f4f4,#e6e6e6);border-color:#bdbdbd;"></div><span class="t" style="left:781.0px;top:831.8px;font-size:15px;color:#a4a4a4;transform:scaleX(1.085);">Edit layout</span><span class="t" style="left:768.0px;top:859.8px;font-size:15px;color:#a4a4a4;transform:scaleX(1.102);">Update layout</span><div class="a " style="left:0px;top:1026px;width:1400px;height:24px;background:linear-gradient(to bottom,#6a6a6a 0,#4a4a4a 2px,#2a2a2a 10px,#1a1a1a 24px);"></div><div class="a " style="left:2px;top:1028px;width:25px;height:21px;background:linear-gradient(#555,#2a2a2a);border:1px solid #777;border-radius:3px;"></div><svg class="a" style="left:5px;top:1030px;" width="20" height="17" viewBox="0 0 20 17"><ellipse cx="10" cy="8" rx="8.5" ry="7" fill="#b8c0a0" stroke="#e0e4d0" stroke-width="1"/></svg><span class="t" style="left:28.0px;top:1027.3px;font-size:15px;color:#ddd;transform:scaleX(0.601);font-weight:bold;">···</span><div class="a " style="left:40px;top:1028px;width:189px;height:22px;background:linear-gradient(to bottom,#2e2e2e 0,#1c1c1c 50%,#111 100%);border:1px solid #4a4a4a;border-bottom-color:#333;border-radius:4px;"></div><span class="t" style="left:69.0px;top:1030.5px;font-size:16px;color:#f0f0f0;transform:scaleX(1.062);">robot.gsch2pcb - x...</span><svg class="a" style="left:47px;top:1032px;" width="13" height="14" viewBox="0 0 13 14"><rect x="1" y="2" width="11" height="11" fill="#6fae3c" stroke="#e8f0d8" stroke-width=".8"/><rect x="1" y="1" width="4" height="4" fill="#f0f0e0"/></svg><div class="a " style="left:232px;top:1028px;width:190px;height:22px;background:linear-gradient(to bottom,#6a7076 0,#5a6066 50%,#4c5258 100%);border:1px solid #7c848c;border-radius:4px;"></div><span class="t" style="left:261.0px;top:1030.5px;font-size:16px;color:#f0f0f0;transform:scaleX(1.160);font-weight:bold;">[#geda]</span><svg class="a" style="left:237px;top:1031px;" width="16" height="15" viewBox="0 0 16 15"><rect x="5" y="1" width="10" height="8" fill="#8a9098" stroke="#555"/><rect x="1" y="6" width="10" height="8" fill="#a8aeb6" stroke="#555"/></svg><div class="a " style="left:424px;top:1028px;width:191px;height:22px;background:linear-gradient(to bottom,#2e2e2e 0,#1c1c1c 50%,#111 100%);border:1px solid #4a4a4a;border-bottom-color:#333;border-radius:4px;"></div><span class="t" style="left:454.0px;top:1030.5px;font-size:16px;color:#f0f0f0;transform:scaleX(1.035);">robot-io.sch - gsch...</span><svg class="a" style="left:431px;top:1031px;" width="15" height="15" viewBox="0 0 15 15"><rect x="1" y="2" width="12" height="12" fill="#f0eee6" stroke="#999"/><path d="M6 11 L12 2 L14 3.5 L8 12.5Z" fill="#e8963a"/></svg><div class="a " style="left:618px;top:1028px;width:190px;height:22px;background:linear-gradient(to bottom,#2e2e2e 0,#1c1c1c 50%,#111 100%);border:1px solid #4a4a4a;border-bottom-color:#333;border-radius:4px;"></div><span class="t" style="left:647.0px;top:1030.5px;font-size:16px;color:#f0f0f0;transform:scaleX(0.993);">gEDA - File Browser</span><svg class="a" style="left:624px;top:1031px;" width="15" height="16" viewBox="0 0 15 16"><rect x="1" y="1" width="13" height="14" rx="1.5" fill="#e8a838" stroke="#8a5a10"/><path d="M2 6 H13 M2 10.5 H13" stroke="#8a5a10"/></svg><div class="a " style="left:810px;top:1028px;width:191px;height:22px;background:linear-gradient(to bottom,#2e2e2e 0,#1c1c1c 50%,#111 100%);border:1px solid #4a4a4a;border-bottom-color:#333;border-radius:4px;"></div><span class="t" style="left:840.0px;top:1030.5px;font-size:16px;color:#f0f0f0;transform:scaleX(1.045);">pcjc2@pcjc2lap: ~/...</span><svg class="a" style="left:817px;top:1032px;" width="15" height="13" viewBox="0 0 15 13"><rect x=".5" y=".5" width="14" height="12" rx="1" fill="#bbb" stroke="#555"/><rect x="2" y="2" width="11" height="8" fill="#222"/></svg><div class="a " style="left:1003px;top:1028px;width:190px;height:22px;background:linear-gradient(to bottom,#2e2e2e 0,#1c1c1c 50%,#111 100%);border:1px solid #4a4a4a;border-bottom-color:#333;border-radius:4px;"></div><span class="t" style="left:1033.0px;top:1030.5px;font-size:16px;color:#f0f0f0;transform:scaleX(1.057);">Gerber Viewer1.1....</span><svg class="a" style="left:1010px;top:1031px;" width="17" height="15" viewBox="0 0 17 15"><rect x="5" y="1" width="10" height="9" fill="#ddd" stroke="#666"/><rect x="1" y="4" width="10" height="9" fill="#eee" stroke="#666"/><circle cx="10" cy="9" r="3" fill="#888"/></svg><span class="t" style="left:1196.0px;top:1027.3px;font-size:15px;color:#ddd;transform:scaleX(0.601);font-weight:bold;">···</span><svg class="a" style="left:1212px;top:1029px;" width="19" height="19" viewBox="0 0 19 19"><rect x="1" y="15" width="3" height="3" fill="#5a8ad0" stroke="#2a4a90" stroke-width=".5"/><rect x="5" y="11" width="3" height="6" fill="#5a8ad0" stroke="#2a4a90" stroke-width=".5"/><rect x="10" y="7" width="3" height="10" fill="#5a8ad0" stroke="#2a4a90" stroke-width=".5"/><rect x="14" y="4" width="3" height="13" fill="#5a8ad0" stroke="#2a4a90" stroke-width=".5"/></svg><svg class="a" style="left:1237px;top:1031px;" width="20" height="15" viewBox="0 0 20 15"><rect x=".5" y=".5" width="19" height="14" fill="#f4f4f4" stroke="#555"/><path d="M1 1 L10 9 L19 1 M1 14 L7.5 7 M19 14 L12.5 7" stroke="#555" fill="none"/></svg><svg class="a" style="left:1260px;top:1027px;" width="26" height="23" viewBox="0 0 26 23"><path d="M2 2 H14 V10 H7 L4 13 V10 H2Z" fill="#f0f0f0" stroke="#aaa" stroke-width=".6"/><circle cx="17" cy="14" r="7.5" fill="#5ac83a" stroke="#2a7a18"/><ellipse cx="15" cy="11" rx="3.5" ry="2.2" fill="#b8f0a0" opacity=".7"/></svg><div class="a " style="left:1286px;top:1027px;width:90px;height:23px;background:#b2b2b2;border:1px solid #8a8a8a;"></div><div class="a " style="left:1345px;top:1027px;width:1px;height:23px;background:#6a6a6a;"></div><div class="a " style="left:1288px;top:1029px;width:14px;height:11px;background:#b8cce0;border:1px solid #111;"></div><div class="a " style="left:1301px;top:1029px;width:15px;height:16px;background:#b0c4d8;border:1px solid #111;"></div><div class="a " style="left:1317px;top:1028px;width:15px;height:11px;background:#b8cce0;border:1px solid #111;"></div><div class="a " style="left:1288px;top:1039px;width:11px;height:9px;background:#fdfdfd;border:1px solid #111;"></div><div class="a " style="left:1298px;top:1041px;width:9px;height:7px;background:#b8cce0;border:1px solid #111;"></div><svg class="a" style="left:1378px;top:1028px;" width="21" height="22" viewBox="0 0 21 22"><path d="M2 6 H19 L17 21 H4Z" fill="#8ac838" stroke="#4a7a18"/><rect x="1" y="3" width="19" height="4" rx="1" fill="#a8dc58" stroke="#4a7a18"/><path d="M7 10 L6 18 M10.5 10 V18 M14 10 L15 18" stroke="#e8f8c8" stroke-width="1.2"/></svg></body></html>
